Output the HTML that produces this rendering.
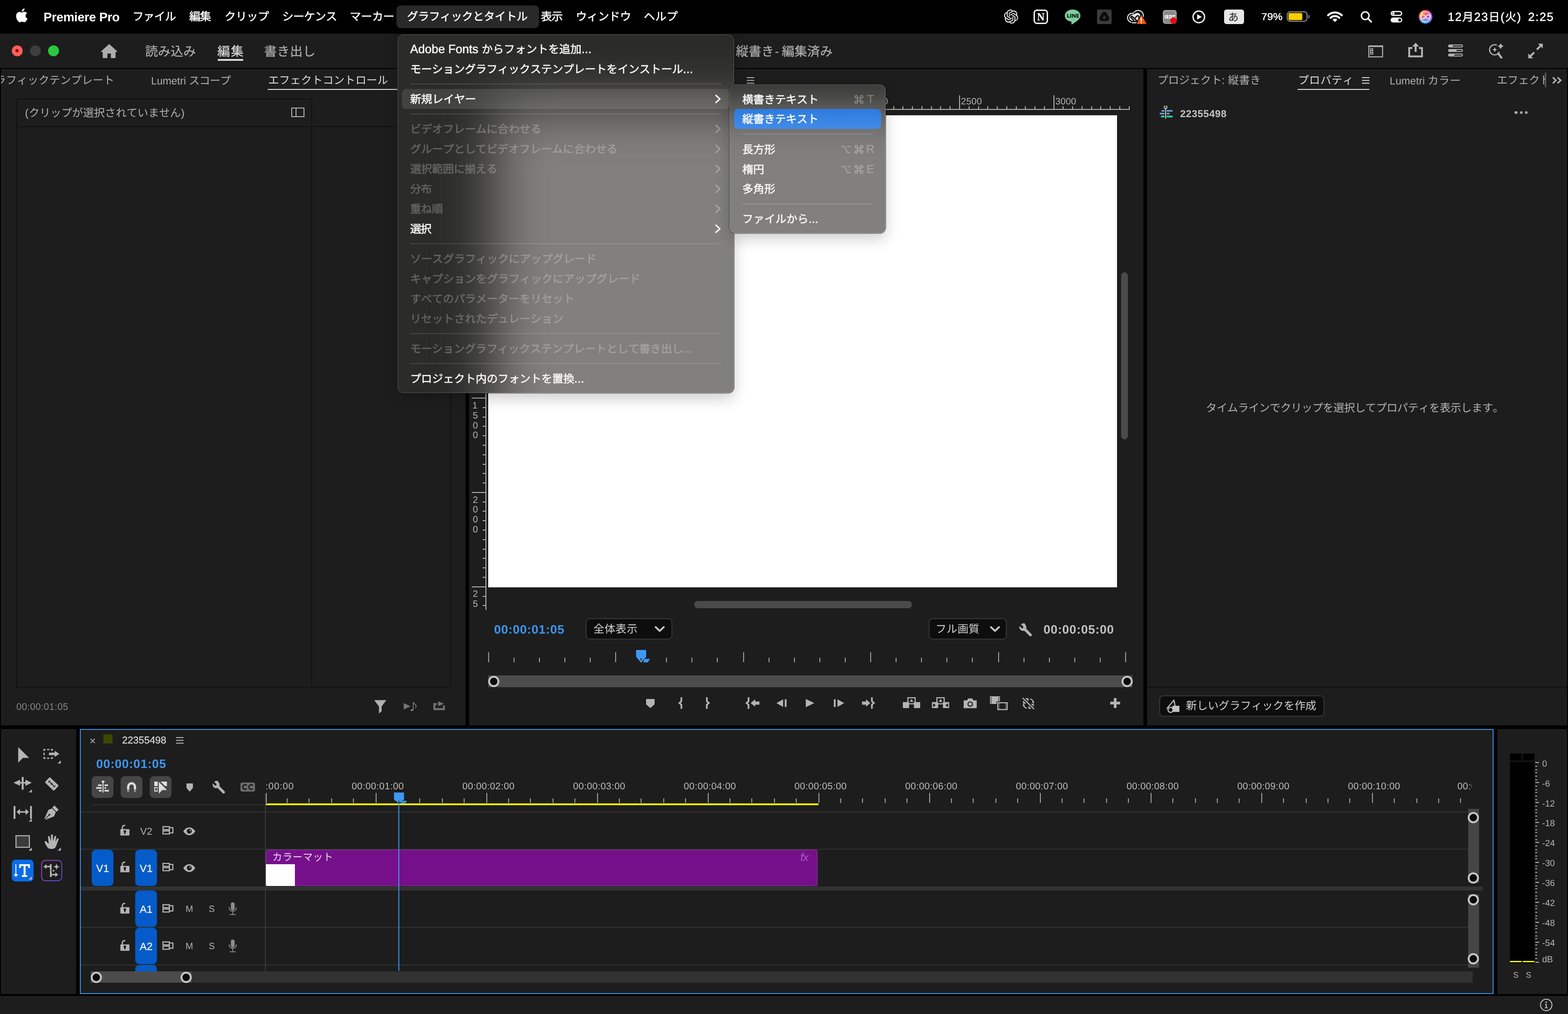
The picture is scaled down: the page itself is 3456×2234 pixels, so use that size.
<!DOCTYPE html>
<html lang="ja"><head><meta charset="utf-8"><title>Premiere Pro</title>
<style>
html,body{margin:0;padding:0;background:#1d1d1d}
body{width:3456px;height:2234px;position:relative;overflow:hidden;font-family:"Liberation Sans","Noto Sans CJK JP",sans-serif;font-kerning:none;text-rendering:geometricPrecision;-webkit-font-smoothing:antialiased}
.b{position:absolute;box-sizing:border-box}
.t{position:absolute;white-space:nowrap;will-change:transform}
</style></head><body>
<div class="b " style="left:0px;top:0px;width:3456px;height:74px;background:#000;"></div><svg class="b" style="left:34px;top:18px;overflow:visible" width="28" height="33" viewBox="0 0 28 33" ><path d="M21.9 17.3c0-4 3.3-5.9 3.4-6-1.9-2.7-4.7-3.1-5.7-3.1-2.4-.2-4.7 1.4-5.9 1.4-1.2 0-3.1-1.4-5.1-1.3-2.6 0-5 1.5-6.4 3.9-2.7 4.7-.7 11.7 2 15.5 1.3 1.9 2.8 4 4.9 3.9 2-.100 2.7-1.3 5.1-1.3 2.4 0 3 1.3 5.1 1.2 2.1 0 3.4-1.9 4.7-3.8 1.5-2.2 2.1-4.3 2.1-4.4-.100 0-4.1-1.6-4.2-6zM18 5.500c1.1-1.3 1.8-3.1 1.6-4.9-1.5.100-3.4 1-4.5 2.3-1 1.1-1.9 3-1.6 4.7 1.7.100 3.4-.900 4.5-2.100z" fill="#fff" transform="translate(0.6,0) scale(0.99,0.985)"/></svg><div class="t " style="left:95.66px;top:9.59px;font-size:27.5px;line-height:55.0px;color:#fff;letter-spacing:-0.299px;font-weight:700;">Premiere Pro</div><div class="t " style="left:292.06px;top:12.83px;font-size:24.8px;line-height:49.6px;color:#fff;-webkit-text-stroke:0.55px #fff;"><span style="letter-spacing:-0.94px">ファイル</span></div><div class="t " style="left:417.48px;top:12.83px;font-size:24.8px;line-height:49.6px;color:#fff;letter-spacing:-1.360px;-webkit-text-stroke:0.55px #fff;"><span style="letter-spacing:-1.36px">編集</span></div><div class="t " style="left:494.87px;top:12.83px;font-size:24.8px;line-height:49.6px;color:#fff;letter-spacing:0.121px;-webkit-text-stroke:0.55px #fff;"><span style="letter-spacing:-0.38px">クリップ</span></div><div class="t " style="left:622.15px;top:12.83px;font-size:24.8px;line-height:49.6px;color:#fff;-webkit-text-stroke:0.55px #fff;"><span style="letter-spacing:-0.76px">シーケンス</span></div><div class="t " style="left:771.29px;top:12.83px;font-size:24.8px;line-height:49.6px;color:#fff;-webkit-text-stroke:0.55px #fff;"><span style="letter-spacing:-0.27px">マーカー</span></div><div class="b " style="left:874px;top:12px;width:314px;height:50px;background:#292929;border-radius:9px"></div><div class="t " style="left:896.76px;top:12.83px;font-size:24.8px;line-height:49.6px;color:#fff;-webkit-text-stroke:0.55px #fff;"><span style="letter-spacing:-0.64px">グラフィックとタイトル</span></div><div class="t " style="left:1192.23px;top:12.83px;font-size:24.8px;line-height:49.6px;color:#fff;letter-spacing:-1.041px;-webkit-text-stroke:0.55px #fff;"><span style="letter-spacing:-1.04px">表示</span></div><div class="t " style="left:1268.90px;top:12.83px;font-size:24.8px;line-height:49.6px;color:#fff;-webkit-text-stroke:0.55px #fff;"><span style="letter-spacing:-0.45px">ウィンドウ</span></div><div class="t " style="left:1419.26px;top:12.83px;font-size:24.8px;line-height:49.6px;color:#fff;letter-spacing:0.213px;-webkit-text-stroke:0.55px #fff;"><span style="letter-spacing:0.21px">ヘルプ</span></div><svg class="b" style="left:2213.2px;top:21.2px" width="31" height="31" viewBox="0 0 24 24"><path d="M22.2819 9.8211a5.9847 5.9847 0 0 0-.5157-4.9108 6.0462 6.0462 0 0 0-6.5098-2.9A6.0651 6.0651 0 0 0 4.9807 4.1818a5.9847 5.9847 0 0 0-3.9977 2.9 6.0462 6.0462 0 0 0 .7427 7.0966 5.98 5.98 0 0 0 .511 4.9107 6.051 6.051 0 0 0 6.5146 2.9001A5.9847 5.9847 0 0 0 13.2599 24a6.0557 6.0557 0 0 0 5.7718-4.2058 5.9894 5.9894 0 0 0 3.9977-2.9001 6.0557 6.0557 0 0 0-.7475-7.0729zm-9.022 12.6081a4.4755 4.4755 0 0 1-2.8764-1.0408l.1419-.0804 4.7783-2.7582a.7948.7948 0 0 0 .3927-.6813v-6.7369l2.02 1.1686a.071.071 0 0 1 .038.052v5.5826a4.504 4.504 0 0 1-4.4945 4.4944zm-9.6607-4.1254a4.4708 4.4708 0 0 1-.5346-3.0137l.142.0852 4.783 2.7582a.7712.7712 0 0 0 .7806 0l5.8428-3.3685v2.3324a.0804.0804 0 0 1-.0332.0615L9.74 19.9502a4.4992 4.4992 0 0 1-6.1408-1.6464zM2.3408 7.8956a4.485 4.485 0 0 1 2.3655-1.9728V11.6a.7664.7664 0 0 0 .3879.6765l5.8144 3.3543-2.0201 1.1685a.0757.0757 0 0 1-.071 0l-4.8303-2.7865A4.504 4.504 0 0 1 2.3408 7.872zm16.5963 3.8558L13.1038 8.364 15.1192 7.2a.0757.0757 0 0 1 .071 0l4.8303 2.7913a4.4944 4.4944 0 0 1-.6765 8.1042v-5.6772a.79.79 0 0 0-.407-.667zm2.0107-3.0231l-.142-.0852-4.7735-2.7818a.7759.7759 0 0 0-.7854 0L9.409 9.2297V6.8974a.0662.0662 0 0 1 .0284-.0615l4.8303-2.7866a4.4992 4.4992 0 0 1 6.6802 4.66zM8.3065 12.863l-2.02-1.1638a.0804.0804 0 0 1-.038-.0567V6.0742a4.4992 4.4992 0 0 1 7.3757-3.4537l-.142.0805L8.704 5.459a.7948.7948 0 0 0-.3927.6813zm1.0976-2.3654l2.602-1.4998 2.6069 1.4998v2.9994l-2.5974 1.4997-2.6067-1.4997Z" fill="#f2f2f2"/></svg><svg class="b" style="left:2278px;top:21px;overflow:visible" width="32" height="32" viewBox="0 0 32 32" ><rect x="1.5" y="1.5" width="29" height="29" rx="6" fill="#0a0a0a" stroke="#f2f2f2" stroke-width="3"/><path d="M8.5 8 H13.5 L20.5 18.8 V9.8 L18.5 9.4 V8 H24 V9.4 L22.4 9.8 V24 H19.6 L11.7 12.2 V22.2 L13.8 22.6 V24 H8.5 V22.6 L10 22.2 V9.8 L8.5 9.4 Z" fill="#f2f2f2"/></svg><svg class="b" style="left:2347px;top:20.6px;overflow:visible" width="34.5" height="33" viewBox="0 0 34.5 33" ><path d="M17.2 0 C7.7 0 0 6 0 13.5 C0 20 5.8 25.4 13.8 26.7 C14.8 26.9 15 27.5 14.8 28.7 L14.5 31.5 C14.4 32.8 15.2 33 16.2 32.4 C20 30.2 27.5 25.5 31 21 C33.2 18.7 34.4 16.2 34.4 13.5 C34.4 6 26.7 0 17.2 0 Z" fill="#7ecf9f"/><g fill="#0e2a18"><rect x="5" y="9.5" width="2.4" height="8.5"/><rect x="5" y="15.8" width="5.5" height="2.2"/><rect x="11.8" y="9.5" width="2.4" height="8.5"/><path d="M15.8 9.5 H18 L21.6 14.5 V9.5 H23.9 V18 H21.7 L18.1 13 V18 H15.8 Z"/><path d="M25.5 9.5 H31 V11.6 H27.8 V12.8 H30.8 V14.8 H27.8 V15.9 H31 V18 H25.5 Z"/></g></svg><svg class="b" style="left:2418px;top:21px;overflow:visible" width="32" height="32" viewBox="0 0 32 32" ><rect x="0" y="0" width="32" height="32" rx="2.5" fill="#3c3c3c"/><path d="M12.5 5 H19.5 L27.5 19 L24 25.5 H8 L4.5 19 Z" fill="#0c0c0c"/><path d="M16 12.5 L20.3 19.8 H11.7 Z" fill="#3c3c3c"/></svg><svg class="b" style="left:2484px;top:21px;overflow:visible" width="44" height="33" viewBox="0 0 44 33" ><circle cx="11.2" cy="18.2" r="9.9" fill="none" stroke="#f2f2f2" stroke-width="2.3"/><circle cx="24.6" cy="13.6" r="11.4" fill="none" stroke="#f2f2f2" stroke-width="2.3"/><circle cx="11.2" cy="18.2" r="8.8" fill="#000"/><circle cx="24.6" cy="13.6" r="10.3" fill="#000"/><rect x="10" y="20" width="16" height="9.3" fill="#000"/><path d="M11 29.2 H24" stroke="#f2f2f2" stroke-width="2.3"/><circle cx="11.4" cy="18.4" r="6.3" fill="#e6e6e6"/><circle cx="24.4" cy="14" r="7.8" fill="#e6e6e6"/><path d="M11 12.1 L22 7 L30 20 L20 25 L11 24.7 Z" fill="#e6e6e6"/><path d="M23 26 L11.6 15.6 C9.6 13.8 7.4 16.6 9.2 18.4 L15.5 24.5" fill="none" stroke="#000" stroke-width="2.7" stroke-linejoin="round"/><path d="M15.2 9.6 C18 5.4 25 4.4 28.6 8.2 C31.2 11 30.6 14 29.2 15.6 L25 20" fill="none" stroke="#000" stroke-width="2.7"/><path d="M16.8 19.6 L22.2 14.2 C23.8 12.6 26.4 14.6 25 16.4" fill="none" stroke="#000" stroke-width="2.6"/><path d="M32.2 11.4 L43.3 30.4 C44 31.6 43.4 32.6 42 32.6 H22.6 C21.2 32.6 20.6 31.6 21.3 30.4 L30.4 11.4 C30.9 10.6 31.7 10.6 32.2 11.4 Z" fill="#f55a08" stroke="#000" stroke-width="1.6"/><rect x="30.1" y="17.6" width="2.5" height="8.6" fill="#fff"/><rect x="30.1" y="28" width="2.5" height="2.5" fill="#fff"/></svg><svg class="b" style="left:2562.7px;top:22px;overflow:visible" width="31" height="30.5" viewBox="0 0 31 30.5" ><rect x="0.8" y="0.8" width="28.8" height="28.8" rx="5" fill="#8a8a8a" stroke="#d0d0d0" stroke-width="1.2"/><g fill="#fff"><rect x="4.2" y="11" width="2.2" height="8"/><path d="M8 11 H12.8 V12.8 H10.2 V14 H12.5 V15.8 H10.2 V17.2 H12.8 V19 H8 Z"/><path d="M14.2 11 H17 C20 11 21 13 21 15 C21 17 20 19 17 19 H14.2 Z M16.4 12.9 V17.1 H17 C18.3 17.1 18.8 16.2 18.8 15 C18.8 13.8 18.3 12.9 17 12.9 Z"/><path d="M21.5 11 H27 V12.9 H25.4 V16 H23.2 V12.9 H21.5 Z"/></g><circle cx="23.2" cy="23.3" r="7" fill="#f00014"/></svg><svg class="b" style="left:2628px;top:22.7px;overflow:visible" width="28.6" height="28.6" viewBox="0 0 28.6 28.6" ><circle cx="14.3" cy="14.3" r="12.7" fill="none" stroke="#f2f2f2" stroke-width="3"/><path d="M10.5 8.3 L21 14.3 L10.5 20.3 Z" fill="#f2f2f2"/></svg><div class="b " style="left:2698px;top:21px;width:44px;height:32px;background:#e6e6e6;border-radius:5.500px"></div><div class="t " style="left:2707.18px;top:16.12px;font-size:22px;line-height:44px;color:#1a1a1a;"><span style="font-size:23px">あ</span></div><svg class="b" style="left:2836px;top:25.4px;overflow:visible" width="51" height="23.2" viewBox="0 0 51 23.2" ><rect x="1.2" y="1.2" width="43.6" height="20.6" rx="6.2" fill="none" stroke="#8c8c8c" stroke-width="2.3"/><rect x="3.9" y="3.8" width="30.6" height="15.5" rx="3.2" fill="#ffcc02"/><path d="M47.8 7.4 C49.8 8 50.5 9.6 50.5 11.6 C50.5 13.6 49.8 15.2 47.8 15.8 Z" fill="#8c8c8c"/></svg><svg class="b" style="left:2925px;top:24px;overflow:visible" width="34.5" height="25" viewBox="0 0 34.5 25" ><path d="M2.2 9.6 A21.5 21.5 0 0 1 32.3 9.6" fill="none" stroke="#f2f2f2" stroke-width="4.5" stroke-linecap="round"/><path d="M7.7 15.4 A13.8 13.8 0 0 1 26.8 15.4" fill="none" stroke="#f2f2f2" stroke-width="4.5" stroke-linecap="round"/><path d="M17.25 24.7 L11.8 19.2 A7.6 7.6 0 0 1 22.7 19.2 Z" fill="#f2f2f2"/></svg><svg class="b" style="left:2999px;top:23.8px;overflow:visible" width="25.5" height="25" viewBox="0 0 25.5 25" ><circle cx="10.1" cy="10.6" r="8.5" fill="none" stroke="#f2f2f2" stroke-width="3.3"/><path d="M16.4 17 L23.4 24" stroke="#f2f2f2" stroke-width="3.7" stroke-linecap="round"/></svg><svg class="b" style="left:3065.4px;top:24.1px;overflow:visible" width="25.6" height="25.6" viewBox="0 0 25.6 25.6" ><rect x="1.4" y="1.4" width="22.8" height="8.4" rx="4.2" fill="none" stroke="#f2f2f2" stroke-width="2.8"/><circle cx="6.3" cy="5.6" r="2.6" fill="#f2f2f2"/><rect x="0" y="14.5" width="25.6" height="11.1" rx="5.55" fill="#f2f2f2"/><circle cx="20" cy="20.05" r="3.1" fill="#000"/></svg><svg class="b" style="left:3127.4px;top:22px;overflow:visible" width="30" height="30" viewBox="0 0 30 30" ><defs><radialGradient id="sg1" cx="0.2" cy="0.2" r="0.9"><stop offset="0" stop-color="#ffb03c"/><stop offset="0.45" stop-color="#f4506e"/><stop offset="0.8" stop-color="#a55cf2"/><stop offset="1" stop-color="#5a78ff"/></radialGradient><radialGradient id="sg2" cx="0.35" cy="0.95" r="0.6"><stop offset="0" stop-color="#37c8ff"/><stop offset="0.6" stop-color="#37c8ff" stop-opacity="0.35"/><stop offset="1" stop-color="#37c8ff" stop-opacity="0"/></radialGradient></defs><circle cx="15" cy="15" r="15" fill="url(#sg1)"/><circle cx="15" cy="15" r="15" fill="url(#sg2)"/><path d="M4.5 15.5 C7 8.5 12 9.5 15 15 C18 20.5 23 21.5 25.5 14.5 C23 9 18.5 9.5 15 15 C11.5 20.5 7 21 4.5 15.5 Z" fill="none" stroke="#fff" stroke-width="1.6" opacity="0.95"/><circle cx="15" cy="15" r="11" fill="none" stroke="#fff" stroke-width="1.5" opacity="0.8"/></svg><div class="t " style="left:2779.69px;top:15.49px;font-size:21.6px;line-height:43.2px;color:#fff;-webkit-text-stroke:0.50px #fff;transform:scaleX(1.085);transform-origin:0 50%">79%</div><div class="t " style="left:3191.02px;top:10.94px;font-size:26px;line-height:52px;color:#fff;letter-spacing:1.517px;-webkit-text-stroke:0.5px #fff">12<span style="font-size:24.6px">月</span>23<span style="font-size:24.6px">日</span>(<span style="font-size:24.6px">火</span>)</div><div class="t " style="left:3367.69px;top:11.07px;font-size:26px;line-height:52px;color:#fff;letter-spacing:1.732px;-webkit-text-stroke:0.55px #fff">2:25</div><div class="b " style="left:0px;top:74px;width:3456px;height:76px;background:#1d1d1d;"></div><div class="b " style="left:0px;top:150px;width:3456px;height:2px;background:#000;"></div><div class="b " style="left:25.799999999999997px;top:99.8px;width:24px;height:24px;background:#fe5f57;border-radius:50%"></div><div class="b " style="left:65.8px;top:99.8px;width:24px;height:24px;background:#3e3e3e;border-radius:50%"></div><div class="b " style="left:105.8px;top:99.8px;width:24px;height:24px;background:#28c840;border-radius:50%"></div><div class="b " style="left:34.199999999999996px;top:108.2px;width:7.2px;height:7.2px;background:#8a0a05;border-radius:50%"></div><svg class="b" style="left:221.5px;top:97px;overflow:visible" width="37" height="31" viewBox="0 0 37 31" ><path d="M18.3 0.3 Q18.5 0 18.9 0.3 L36.3 16.2 Q36.7 17.6 35.4 17.6 L32.6 17.6 L32.6 30.6 Q32.6 31 32.2 31 L22.4 31 L22.4 21 L14.6 21 L14.6 31 L4.8 31 Q4.4 31 4.4 30.6 L4.4 17.6 L1.4 17.6 Q0.3 17.6 0.6 16.2 Z" fill="#adadad"/></svg><div class="t " style="left:319.94px;top:85.74px;font-size:28px;line-height:56px;color:#b0b0b0;-webkit-text-stroke:0.25px #b0b0b0;"><span style="letter-spacing:0px">読み込み</span></div><div class="t " style="left:479.27px;top:85.74px;font-size:28px;line-height:56px;color:#dcdcdc;letter-spacing:1.624px;-webkit-text-stroke:0.25px #dcdcdc;"><span style="letter-spacing:1.625px">編集</span></div><div class="b " style="left:480px;top:130px;width:56px;height:3.5px;background:#dcdcdc;"></div><div class="t " style="left:582.46px;top:85.74px;font-size:28px;line-height:56px;color:#b0b0b0;letter-spacing:0.465px;-webkit-text-stroke:0.25px #b0b0b0;"><span style="letter-spacing:0.465px">書き出し</span></div><div class="t " style="left:1622.01px;top:85.74px;font-size:28px;line-height:56px;color:#b0b0b0;-webkit-text-stroke:0.25px #b0b0b0;"><span style="letter-spacing:0px">縦書き</span></div><div class="t " style="left:1707.74px;top:86.77px;font-size:26px;line-height:52px;color:#b0b0b0;-webkit-text-stroke:0.25px #b0b0b0;">-</div><div class="t " style="left:1723.07px;top:85.74px;font-size:28px;line-height:56px;color:#b0b0b0;letter-spacing:0.061px;-webkit-text-stroke:0.25px #b0b0b0;"><span style="letter-spacing:0.06px">編集済み</span></div><svg class="b" style="left:3015.8px;top:100px;overflow:visible" width="32.5" height="26.5" viewBox="0 0 32.5 26.5" ><rect x="1.1" y="1.1" width="30.2" height="24.2" fill="none" stroke="#b4b4b4" stroke-width="2.2"/><rect x="0" y="0" width="32.4" height="3.6" fill="#b4b4b4"/><rect x="4" y="6.2" width="6.6" height="14.2" fill="#b4b4b4"/><rect x="5.9" y="7.6" width="2.8" height="2.6" fill="#1d1d1d"/><rect x="5.9" y="12" width="2.8" height="2.6" fill="#1d1d1d"/><rect x="5.9" y="16.4" width="2.8" height="2.6" fill="#1d1d1d"/></svg><svg class="b" style="left:3103.7px;top:94px;overflow:visible" width="32.5" height="32.5" viewBox="0 0 32.5 32.5" ><path d="M9 11.8 H2 V30.3 H30.2 V11.8 H23.5" fill="none" stroke="#b4b4b4" stroke-width="4"/><path d="M16.2 0.2 L24 8.6 H18.4 V20.2 H14 V8.6 H8.4 Z" fill="#b4b4b4"/></svg><svg class="b" style="left:3192px;top:97.8px;overflow:visible" width="32.5" height="26.5" viewBox="0 0 32.5 26.5" ><rect x="0" y="0" width="32.3" height="6.4" rx="3.2" fill="#b4b4b4"/><rect x="0" y="10" width="32.3" height="6.4" rx="3.2" fill="#b4b4b4"/><rect x="0" y="20" width="32.3" height="6.4" rx="3.2" fill="#b4b4b4"/><rect x="10" y="2" width="20.4" height="2.4" rx="1.2" fill="#1d1d1d"/><rect x="18" y="12" width="12.4" height="2.4" rx="1.2" fill="#1d1d1d"/><rect x="13.5" y="22" width="16.9" height="2.4" rx="1.2" fill="#1d1d1d"/></svg><svg class="b" style="left:3282px;top:95px;overflow:visible" width="32" height="34.5" viewBox="0 0 32 34.5" ><path d="M22.6 19.2 A11.2 11.2 0 1 1 17.2 4.6" fill="none" stroke="#b4b4b4" stroke-width="2.6"/><path d="M20.4 23 L27 31.8" stroke="#b4b4b4" stroke-width="4.6" stroke-linecap="round"/><path d="M25.6 0.0 Q27.096 5.304 32.4 6.8 Q27.096 8.296 25.6 13.6 Q24.104000000000003 8.296 18.8 6.8 Q24.104000000000003 5.304 25.6 0.0 Z" fill="#b4b4b4"/><path d="M12.6 9.6 Q13.7 13.5 17.6 14.6 Q13.7 15.7 12.6 19.6 Q11.5 15.7 7.6 14.6 Q11.5 13.5 12.6 9.6 Z" fill="#b4b4b4"/></svg><svg class="b" style="left:3367.5px;top:95.8px;overflow:visible" width="33.5" height="32.7" viewBox="0 0 33.5 32.7" ><path d="M21.8 0.2 H32.4 V10.8 Z" fill="#b4b4b4"/><path d="M27.6 5 L19.4 13.2" stroke="#b4b4b4" stroke-width="4.2"/><path d="M0.5 21.8 V32.4 H11.1 Z" fill="#b4b4b4"/><path d="M5.3 27.6 L13.5 19.4" stroke="#b4b4b4" stroke-width="4.2"/></svg><div class="b " style="left:0px;top:152px;width:2px;height:1446px;background:#000;"></div><div class="b " style="left:1026px;top:152px;width:8px;height:1446px;background:#000;"></div><div class="b " style="left:2520px;top:152px;width:8px;height:1446px;background:#000;"></div><div class="b " style="left:3454px;top:152px;width:2px;height:1446px;background:#000;"></div><div class="b " style="left:0px;top:1598px;width:3456px;height:8px;background:#000;"></div><div class="b" style="left:2px;top:156px;width:260px;height:40px;overflow:hidden"><div class="t " style="left:-13.08px;top:-2.40px;font-size:24px;line-height:48px;color:#b0b0b0;letter-spacing:0.217px;"><span style="letter-spacing:-0.09px">ラフィックテンプレート</span></div></div><div class="t " style="left:332.81px;top:153.60px;font-size:24px;line-height:48px;color:#b0b0b0;"><span style="font-size:23.04px">Lumetri </span><span style="letter-spacing:-1.04px">スコープ</span></div><div class="t " style="left:590.98px;top:153.60px;font-size:24px;line-height:48px;color:#dcdcdc;letter-spacing:0.668px;"><span style="letter-spacing:0.05px">エフェクトコントロール</span></div><div class="b " style="left:590px;top:196px;width:300px;height:2.3px;background:#e2e2e2;"></div><div class="b " style="left:36px;top:216.6px;width:652px;height:2px;background:#111;"></div><div class="b " style="left:36px;top:216.6px;width:2px;height:1298.4px;background:#111;"></div><div class="b " style="left:686px;top:216.6px;width:2px;height:1298.4px;background:#111;"></div><div class="b " style="left:36px;top:278px;width:958px;height:2px;background:#111;"></div><div class="b " style="left:992px;top:278px;width:2px;height:1237px;background:#111;"></div><div class="b " style="left:36px;top:1513px;width:958px;height:2px;background:#111;"></div><div class="t " style="left:54.71px;top:226.30px;font-size:24px;line-height:48px;color:#b0b0b0;letter-spacing:0.153px;">(<span style="letter-spacing:-0.03px">クリップが選択されていません</span>)</div><svg class="b" style="left:641.7px;top:237.4px;overflow:visible" width="29" height="21" viewBox="0 0 29 21" ><rect x="1" y="1" width="27" height="19" fill="none" stroke="#b4b4b4" stroke-width="2"/><rect x="9.5" y="1" width="2" height="19" fill="#b4b4b4"/></svg><div class="t " style="left:35.68px;top:1537.38px;font-size:21px;line-height:42px;color:#868686;letter-spacing:0.327px;">00:00:01:05</div><svg class="b" style="left:0px;top:0px;overflow:visible" width="3456" height="2234" viewBox="0 0 3456 2234" ><path d="M824.8 1542.6 H851.6 L841.1 1556.5 V1567 L835.3 1572 V1556.5 Z" fill="#b0b0b0"/><path d="M889.8 1548.9 L904.9 1556 L889.8 1563.2 Z" fill="#747474"/><path d="M910.8 1564 V1546.6 C911.6 1551 917.6 1551.6 917.2 1556.6 C917 1558.6 916 1559.6 915 1560.2" fill="none" stroke="#747474" stroke-width="1.9"/><ellipse cx="908.2" cy="1564.3" rx="3.3" ry="2.4" fill="#747474" transform="rotate(-20 908.2 1564.3)"/><path d="M962.8 1551.2 H957.4 V1562.4 H978.4 V1554.3" fill="none" stroke="#747474" stroke-width="4.2"/><path d="M965.8 1545.1 L978.3 1550.6 L965.8 1556 Z" fill="#747474"/></svg><svg class="b" style="left:1646.4px;top:170px;overflow:visible" width="16.5" height="14.5" viewBox="0 0 16.5 14.5" ><rect x="0" y="0" width="16.5" height="2" fill="#b0b0b0"/><rect x="0" y="6.2" width="16.5" height="2" fill="#b0b0b0"/><rect x="0" y="12.4" width="16.5" height="2" fill="#b0b0b0"/></svg><div class="b " style="left:1076px;top:210px;width:2px;height:31px;background:#b4b4b4;"></div><div class="b " style="left:1097px;top:234px;width:2px;height:7px;background:#b4b4b4;"></div><div class="b " style="left:1118px;top:234px;width:2px;height:7px;background:#b4b4b4;"></div><div class="b " style="left:1138px;top:234px;width:2px;height:7px;background:#b4b4b4;"></div><div class="b " style="left:1159px;top:234px;width:2px;height:7px;background:#b4b4b4;"></div><div class="b " style="left:1180px;top:234px;width:2px;height:7px;background:#b4b4b4;"></div><div class="b " style="left:1201px;top:234px;width:2px;height:7px;background:#b4b4b4;"></div><div class="b " style="left:1221px;top:234px;width:2px;height:7px;background:#b4b4b4;"></div><div class="b " style="left:1242px;top:234px;width:2px;height:7px;background:#b4b4b4;"></div><div class="b " style="left:1263px;top:234px;width:2px;height:7px;background:#b4b4b4;"></div><div class="b " style="left:1284px;top:210px;width:2px;height:31px;background:#b4b4b4;"></div><div class="b " style="left:1304px;top:234px;width:2px;height:7px;background:#b4b4b4;"></div><div class="b " style="left:1325px;top:234px;width:2px;height:7px;background:#b4b4b4;"></div><div class="b " style="left:1346px;top:234px;width:2px;height:7px;background:#b4b4b4;"></div><div class="b " style="left:1367px;top:234px;width:2px;height:7px;background:#b4b4b4;"></div><div class="b " style="left:1387px;top:234px;width:2px;height:7px;background:#b4b4b4;"></div><div class="b " style="left:1408px;top:234px;width:2px;height:7px;background:#b4b4b4;"></div><div class="b " style="left:1429px;top:234px;width:2px;height:7px;background:#b4b4b4;"></div><div class="b " style="left:1450px;top:234px;width:2px;height:7px;background:#b4b4b4;"></div><div class="b " style="left:1470px;top:234px;width:2px;height:7px;background:#b4b4b4;"></div><div class="b " style="left:1491px;top:210px;width:2px;height:31px;background:#b4b4b4;"></div><div class="b " style="left:1512px;top:234px;width:2px;height:7px;background:#b4b4b4;"></div><div class="b " style="left:1533px;top:234px;width:2px;height:7px;background:#b4b4b4;"></div><div class="b " style="left:1553px;top:234px;width:2px;height:7px;background:#b4b4b4;"></div><div class="b " style="left:1574px;top:234px;width:2px;height:7px;background:#b4b4b4;"></div><div class="b " style="left:1595px;top:234px;width:2px;height:7px;background:#b4b4b4;"></div><div class="b " style="left:1616px;top:234px;width:2px;height:7px;background:#b4b4b4;"></div><div class="b " style="left:1637px;top:234px;width:2px;height:7px;background:#b4b4b4;"></div><div class="b " style="left:1657px;top:234px;width:2px;height:7px;background:#b4b4b4;"></div><div class="b " style="left:1678px;top:234px;width:2px;height:7px;background:#b4b4b4;"></div><div class="b " style="left:1699px;top:210px;width:2px;height:31px;background:#b4b4b4;"></div><div class="b " style="left:1720px;top:234px;width:2px;height:7px;background:#b4b4b4;"></div><div class="b " style="left:1740px;top:234px;width:2px;height:7px;background:#b4b4b4;"></div><div class="b " style="left:1761px;top:234px;width:2px;height:7px;background:#b4b4b4;"></div><div class="b " style="left:1782px;top:234px;width:2px;height:7px;background:#b4b4b4;"></div><div class="b " style="left:1803px;top:234px;width:2px;height:7px;background:#b4b4b4;"></div><div class="b " style="left:1823px;top:234px;width:2px;height:7px;background:#b4b4b4;"></div><div class="b " style="left:1844px;top:234px;width:2px;height:7px;background:#b4b4b4;"></div><div class="b " style="left:1865px;top:234px;width:2px;height:7px;background:#b4b4b4;"></div><div class="b " style="left:1886px;top:234px;width:2px;height:7px;background:#b4b4b4;"></div><div class="b " style="left:1906px;top:210px;width:2px;height:31px;background:#b4b4b4;"></div><div class="b " style="left:1927px;top:234px;width:2px;height:7px;background:#b4b4b4;"></div><div class="b " style="left:1948px;top:234px;width:2px;height:7px;background:#b4b4b4;"></div><div class="b " style="left:1969px;top:234px;width:2px;height:7px;background:#b4b4b4;"></div><div class="b " style="left:1989px;top:234px;width:2px;height:7px;background:#b4b4b4;"></div><div class="b " style="left:2010px;top:234px;width:2px;height:7px;background:#b4b4b4;"></div><div class="b " style="left:2031px;top:234px;width:2px;height:7px;background:#b4b4b4;"></div><div class="b " style="left:2052px;top:234px;width:2px;height:7px;background:#b4b4b4;"></div><div class="b " style="left:2072px;top:234px;width:2px;height:7px;background:#b4b4b4;"></div><div class="b " style="left:2093px;top:234px;width:2px;height:7px;background:#b4b4b4;"></div><div class="b " style="left:2114px;top:210px;width:2px;height:31px;background:#b4b4b4;"></div><div class="b " style="left:2135px;top:234px;width:2px;height:7px;background:#b4b4b4;"></div><div class="b " style="left:2156px;top:234px;width:2px;height:7px;background:#b4b4b4;"></div><div class="b " style="left:2176px;top:234px;width:2px;height:7px;background:#b4b4b4;"></div><div class="b " style="left:2197px;top:234px;width:2px;height:7px;background:#b4b4b4;"></div><div class="b " style="left:2218px;top:234px;width:2px;height:7px;background:#b4b4b4;"></div><div class="b " style="left:2239px;top:234px;width:2px;height:7px;background:#b4b4b4;"></div><div class="b " style="left:2259px;top:234px;width:2px;height:7px;background:#b4b4b4;"></div><div class="b " style="left:2280px;top:234px;width:2px;height:7px;background:#b4b4b4;"></div><div class="b " style="left:2301px;top:234px;width:2px;height:7px;background:#b4b4b4;"></div><div class="b " style="left:2322px;top:210px;width:2px;height:31px;background:#b4b4b4;"></div><div class="b " style="left:2342px;top:234px;width:2px;height:7px;background:#b4b4b4;"></div><div class="b " style="left:2363px;top:234px;width:2px;height:7px;background:#b4b4b4;"></div><div class="b " style="left:2384px;top:234px;width:2px;height:7px;background:#b4b4b4;"></div><div class="b " style="left:2405px;top:234px;width:2px;height:7px;background:#b4b4b4;"></div><div class="b " style="left:2425px;top:234px;width:2px;height:7px;background:#b4b4b4;"></div><div class="b " style="left:2446px;top:234px;width:2px;height:7px;background:#b4b4b4;"></div><div class="b " style="left:2467px;top:234px;width:2px;height:7px;background:#b4b4b4;"></div><div class="b " style="left:2488px;top:234px;width:2px;height:7px;background:#b4b4b4;"></div><div class="b " style="left:1075px;top:240px;width:1415px;height:2px;background:#b4b4b4;"></div><div class="b " style="left:2488px;top:234px;width:2px;height:8px;background:#b4b4b4;"></div><div class="t " style="left:1080.70px;top:202.67px;font-size:20.5px;line-height:41.0px;color:#b4b4b4;">0</div><div class="t " style="left:1288.28px;top:202.67px;font-size:20.5px;line-height:41.0px;color:#b4b4b4;letter-spacing:-0.041px;">500</div><div class="t " style="left:1495.14px;top:202.67px;font-size:20.5px;line-height:41.0px;color:#b4b4b4;letter-spacing:0.319px;">1000</div><div class="t " style="left:1702.74px;top:202.67px;font-size:20.5px;line-height:41.0px;color:#b4b4b4;letter-spacing:0.319px;">1500</div><div class="t " style="left:1910.87px;top:202.67px;font-size:20.5px;line-height:41.0px;color:#b4b4b4;letter-spacing:0.142px;">2000</div><div class="t " style="left:2118.47px;top:202.67px;font-size:20.5px;line-height:41.0px;color:#b4b4b4;letter-spacing:0.142px;">2500</div><div class="t " style="left:2326.32px;top:202.67px;font-size:20.5px;line-height:41.0px;color:#b4b4b4;letter-spacing:0.059px;">3000</div><div class="b " style="left:1040px;top:253px;width:31px;height:2px;background:#b4b4b4;"></div><div class="b " style="left:1064px;top:273px;width:7px;height:2px;background:#b4b4b4;"></div><div class="b " style="left:1064px;top:294px;width:7px;height:2px;background:#b4b4b4;"></div><div class="b " style="left:1064px;top:315px;width:7px;height:2px;background:#b4b4b4;"></div><div class="b " style="left:1064px;top:336px;width:7px;height:2px;background:#b4b4b4;"></div><div class="b " style="left:1064px;top:356px;width:7px;height:2px;background:#b4b4b4;"></div><div class="b " style="left:1064px;top:377px;width:7px;height:2px;background:#b4b4b4;"></div><div class="b " style="left:1064px;top:398px;width:7px;height:2px;background:#b4b4b4;"></div><div class="b " style="left:1064px;top:419px;width:7px;height:2px;background:#b4b4b4;"></div><div class="b " style="left:1064px;top:440px;width:7px;height:2px;background:#b4b4b4;"></div><div class="b " style="left:1040px;top:460px;width:31px;height:2px;background:#b4b4b4;"></div><div class="b " style="left:1064px;top:481px;width:7px;height:2px;background:#b4b4b4;"></div><div class="b " style="left:1064px;top:502px;width:7px;height:2px;background:#b4b4b4;"></div><div class="b " style="left:1064px;top:523px;width:7px;height:2px;background:#b4b4b4;"></div><div class="b " style="left:1064px;top:543px;width:7px;height:2px;background:#b4b4b4;"></div><div class="b " style="left:1064px;top:564px;width:7px;height:2px;background:#b4b4b4;"></div><div class="b " style="left:1064px;top:585px;width:7px;height:2px;background:#b4b4b4;"></div><div class="b " style="left:1064px;top:606px;width:7px;height:2px;background:#b4b4b4;"></div><div class="b " style="left:1064px;top:627px;width:7px;height:2px;background:#b4b4b4;"></div><div class="b " style="left:1064px;top:647px;width:7px;height:2px;background:#b4b4b4;"></div><div class="b " style="left:1040px;top:668px;width:31px;height:2px;background:#b4b4b4;"></div><div class="b " style="left:1064px;top:689px;width:7px;height:2px;background:#b4b4b4;"></div><div class="b " style="left:1064px;top:710px;width:7px;height:2px;background:#b4b4b4;"></div><div class="b " style="left:1064px;top:731px;width:7px;height:2px;background:#b4b4b4;"></div><div class="b " style="left:1064px;top:751px;width:7px;height:2px;background:#b4b4b4;"></div><div class="b " style="left:1064px;top:772px;width:7px;height:2px;background:#b4b4b4;"></div><div class="b " style="left:1064px;top:793px;width:7px;height:2px;background:#b4b4b4;"></div><div class="b " style="left:1064px;top:814px;width:7px;height:2px;background:#b4b4b4;"></div><div class="b " style="left:1064px;top:834px;width:7px;height:2px;background:#b4b4b4;"></div><div class="b " style="left:1064px;top:855px;width:7px;height:2px;background:#b4b4b4;"></div><div class="b " style="left:1040px;top:876px;width:31px;height:2px;background:#b4b4b4;"></div><div class="b " style="left:1064px;top:897px;width:7px;height:2px;background:#b4b4b4;"></div><div class="b " style="left:1064px;top:918px;width:7px;height:2px;background:#b4b4b4;"></div><div class="b " style="left:1064px;top:938px;width:7px;height:2px;background:#b4b4b4;"></div><div class="b " style="left:1064px;top:959px;width:7px;height:2px;background:#b4b4b4;"></div><div class="b " style="left:1064px;top:980px;width:7px;height:2px;background:#b4b4b4;"></div><div class="b " style="left:1064px;top:1001px;width:7px;height:2px;background:#b4b4b4;"></div><div class="b " style="left:1064px;top:1022px;width:7px;height:2px;background:#b4b4b4;"></div><div class="b " style="left:1064px;top:1042px;width:7px;height:2px;background:#b4b4b4;"></div><div class="b " style="left:1064px;top:1063px;width:7px;height:2px;background:#b4b4b4;"></div><div class="b " style="left:1040px;top:1084px;width:31px;height:2px;background:#b4b4b4;"></div><div class="b " style="left:1064px;top:1105px;width:7px;height:2px;background:#b4b4b4;"></div><div class="b " style="left:1064px;top:1125px;width:7px;height:2px;background:#b4b4b4;"></div><div class="b " style="left:1064px;top:1146px;width:7px;height:2px;background:#b4b4b4;"></div><div class="b " style="left:1064px;top:1167px;width:7px;height:2px;background:#b4b4b4;"></div><div class="b " style="left:1064px;top:1188px;width:7px;height:2px;background:#b4b4b4;"></div><div class="b " style="left:1064px;top:1209px;width:7px;height:2px;background:#b4b4b4;"></div><div class="b " style="left:1064px;top:1229px;width:7px;height:2px;background:#b4b4b4;"></div><div class="b " style="left:1064px;top:1250px;width:7px;height:2px;background:#b4b4b4;"></div><div class="b " style="left:1064px;top:1271px;width:7px;height:2px;background:#b4b4b4;"></div><div class="b " style="left:1040px;top:1292px;width:31px;height:2px;background:#b4b4b4;"></div><div class="b " style="left:1064px;top:1313px;width:7px;height:2px;background:#b4b4b4;"></div><div class="b " style="left:1064px;top:1333px;width:7px;height:2px;background:#b4b4b4;"></div><div class="b " style="left:1070px;top:252px;width:2px;height:1092px;background:#b4b4b4;"></div><div class="t " style="left:1041.60px;top:249.17px;font-size:20.5px;line-height:41.0px;color:#b4b4b4;">0</div><div class="t " style="left:1041.62px;top:457.02px;font-size:20.5px;line-height:41.0px;color:#b4b4b4;">5</div><div class="t " style="left:1041.60px;top:478.92px;font-size:20.5px;line-height:41.0px;color:#b4b4b4;">0</div><div class="t " style="left:1041.60px;top:500.82px;font-size:20.5px;line-height:41.0px;color:#b4b4b4;">0</div><div class="t " style="left:1041.32px;top:664.87px;font-size:20.5px;line-height:41.0px;color:#b4b4b4;">1</div><div class="t " style="left:1041.60px;top:686.77px;font-size:20.5px;line-height:41.0px;color:#b4b4b4;">0</div><div class="t " style="left:1041.60px;top:708.67px;font-size:20.5px;line-height:41.0px;color:#b4b4b4;">0</div><div class="t " style="left:1041.60px;top:730.57px;font-size:20.5px;line-height:41.0px;color:#b4b4b4;">0</div><div class="t " style="left:1041.32px;top:872.72px;font-size:20.5px;line-height:41.0px;color:#b4b4b4;">1</div><div class="t " style="left:1041.62px;top:894.62px;font-size:20.5px;line-height:41.0px;color:#b4b4b4;">5</div><div class="t " style="left:1041.60px;top:916.52px;font-size:20.5px;line-height:41.0px;color:#b4b4b4;">0</div><div class="t " style="left:1041.60px;top:938.42px;font-size:20.5px;line-height:41.0px;color:#b4b4b4;">0</div><div class="t " style="left:1041.60px;top:1080.57px;font-size:20.5px;line-height:41.0px;color:#b4b4b4;">2</div><div class="t " style="left:1041.60px;top:1102.47px;font-size:20.5px;line-height:41.0px;color:#b4b4b4;">0</div><div class="t " style="left:1041.60px;top:1124.37px;font-size:20.5px;line-height:41.0px;color:#b4b4b4;">0</div><div class="t " style="left:1041.60px;top:1146.27px;font-size:20.5px;line-height:41.0px;color:#b4b4b4;">0</div><div class="t " style="left:1041.60px;top:1288.42px;font-size:20.5px;line-height:41.0px;color:#b4b4b4;">2</div><div class="t " style="left:1041.62px;top:1310.32px;font-size:20.5px;line-height:41.0px;color:#b4b4b4;">5</div><div class="b " style="left:1075.5px;top:254px;width:1386.5px;height:1039.8px;background:#fff;"></div><div class="b " style="left:2470.5px;top:600px;width:15.5px;height:367.5px;background:#4a4a4a;border-radius:8px"></div><div class="b " style="left:1530px;top:1324px;width:480px;height:16px;background:#4a4a4a;border-radius:8px"></div><div class="t " style="left:1089.33px;top:1359.99px;font-size:27px;line-height:54px;color:#3e97f3;letter-spacing:0.732px;font-weight:700;">00:00:01:05</div><div class="b " style="left:1290.6px;top:1362.4px;width:191px;height:46.6px;background:#0d0d0d;border:2px solid #373737;border-radius:9px"></div><div class="t " style="left:1307.71px;top:1362.80px;font-size:24px;line-height:48px;color:#cfcfcf;letter-spacing:0.435px;"><span style="letter-spacing:0.435px">全体表示</span></div><svg class="b" style="left:1443px;top:1378.7px;" width="22" height="14" viewBox="0 0 22 14"><path d="M2 2.5 L11 11 L20 2.5" fill="none" stroke="#c4c4c4" stroke-width="4" stroke-linecap="round" stroke-linejoin="round"/></svg><div class="b " style="left:2046.9px;top:1362.4px;width:172px;height:46.6px;background:#0d0d0d;border:2px solid #373737;border-radius:9px"></div><div class="t " style="left:2062.32px;top:1362.80px;font-size:24px;line-height:48px;color:#cfcfcf;letter-spacing:0.243px;"><span style="letter-spacing:0.24px">フル画質</span></div><svg class="b" style="left:2181.5px;top:1378.7px;" width="22" height="14" viewBox="0 0 22 14"><path d="M2 2.5 L11 11 L20 2.5" fill="none" stroke="#c4c4c4" stroke-width="4" stroke-linecap="round" stroke-linejoin="round"/></svg><svg class="b" style="left:2245.8px;top:1372.5px;overflow:visible" width="29" height="29" viewBox="0 0 29 29" ><path d="M11.5 0.3 C8.5 -0.5 5.2 0.2 2.9 2.3 L8.3 7.7 L7.7 10.7 L4.7 11.3 L-0.6 6 C-1.5 9 -0.8 12.3 1.5 14.6 C3.9 17 7.4 17.7 10.4 16.6 L22.3 28.5 C23.5 29.7 25.5 29.7 26.7 28.5 C27.9 27.3 27.9 25.3 26.7 24.1 L14.8 12.2 C15.9 9.2 15.2 5.7 12.8 3.3 Z" fill="#b4b4b4" transform="translate(1.5,0.3) scale(0.97)"/></svg><div class="t " style="left:2299.93px;top:1359.99px;font-size:27px;line-height:54px;color:#c2c2c2;letter-spacing:0.767px;font-weight:700;">00:00:05:00</div><div class="b " style="left:1076px;top:1437px;width:2px;height:21.5px;background:#a2a2a2;"></div><div class="b " style="left:1132px;top:1449px;width:2px;height:9.5px;background:#a2a2a2;"></div><div class="b " style="left:1188px;top:1449px;width:2px;height:9.5px;background:#a2a2a2;"></div><div class="b " style="left:1244px;top:1449px;width:2px;height:9.5px;background:#a2a2a2;"></div><div class="b " style="left:1300px;top:1449px;width:2px;height:9.5px;background:#a2a2a2;"></div><div class="b " style="left:1356px;top:1437px;width:2px;height:21.5px;background:#a2a2a2;"></div><div class="b " style="left:1412px;top:1449px;width:2px;height:9.5px;background:#a2a2a2;"></div><div class="b " style="left:1468px;top:1449px;width:2px;height:9.5px;background:#a2a2a2;"></div><div class="b " style="left:1524px;top:1449px;width:2px;height:9.5px;background:#a2a2a2;"></div><div class="b " style="left:1580px;top:1449px;width:2px;height:9.5px;background:#a2a2a2;"></div><div class="b " style="left:1638px;top:1437px;width:2px;height:21.5px;background:#a2a2a2;"></div><div class="b " style="left:1694px;top:1449px;width:2px;height:9.5px;background:#a2a2a2;"></div><div class="b " style="left:1750px;top:1449px;width:2px;height:9.5px;background:#a2a2a2;"></div><div class="b " style="left:1806px;top:1449px;width:2px;height:9.5px;background:#a2a2a2;"></div><div class="b " style="left:1862px;top:1449px;width:2px;height:9.5px;background:#a2a2a2;"></div><div class="b " style="left:1918px;top:1437px;width:2px;height:21.5px;background:#a2a2a2;"></div><div class="b " style="left:1974px;top:1449px;width:2px;height:9.5px;background:#a2a2a2;"></div><div class="b " style="left:2030px;top:1449px;width:2px;height:9.5px;background:#a2a2a2;"></div><div class="b " style="left:2086px;top:1449px;width:2px;height:9.5px;background:#a2a2a2;"></div><div class="b " style="left:2142px;top:1449px;width:2px;height:9.5px;background:#a2a2a2;"></div><div class="b " style="left:2200px;top:1437px;width:2px;height:21.5px;background:#a2a2a2;"></div><div class="b " style="left:2256px;top:1449px;width:2px;height:9.5px;background:#a2a2a2;"></div><div class="b " style="left:2312px;top:1449px;width:2px;height:9.5px;background:#a2a2a2;"></div><div class="b " style="left:2368px;top:1449px;width:2px;height:9.5px;background:#a2a2a2;"></div><div class="b " style="left:2424px;top:1449px;width:2px;height:9.5px;background:#a2a2a2;"></div><div class="b " style="left:2480px;top:1437px;width:2px;height:21.5px;background:#a2a2a2;"></div><svg class="b" style="left:1402px;top:1432px;overflow:visible" width="31" height="28" viewBox="0 0 31 28" ><path d="M0 0 H22.2 V15 L12 27 H10.2 L0 15 Z" fill="#3e97f3"/><rect x="10.2" y="18" width="1.8" height="5.2" fill="#0c1014"/><rect x="10.2" y="23.2" width="1.8" height="4" fill="#a2a2a2"/><path d="M19.5 19.6 H30.2 V20.8 L28.6 22 V23.4 L27 24.6 V26 L25.6 27.6 H16.6 V23.5 Z" fill="#3e97f3"/></svg><div class="b " style="left:1076px;top:1487.7px;width:1420px;height:26.3px;background:#4c4c4c;"></div><svg class="b" style="left:1075.7px;top:1488.7px;overflow:visible" width="24.6" height="24.6" viewBox="0 0 24.6 24.6" ><circle cx="12.3" cy="12.3" r="10.3" fill="#0b0b0b" stroke="#c9c9c9" stroke-width="4"/></svg><svg class="b" style="left:2471.7px;top:1488.7px;overflow:visible" width="24.6" height="24.6" viewBox="0 0 24.6 24.6" ><circle cx="12.3" cy="12.3" r="10.3" fill="#0b0b0b" stroke="#c9c9c9" stroke-width="4"/></svg><svg class="b" style="left:1423.5px;top:1540px;overflow:visible" width="19" height="20" viewBox="0 0 19 20" ><path d="M0 0 H18.8 V11.7 L9.4 20 L0 11.7 Z" fill="#b4b4b4"/></svg><svg class="b" style="left:0px;top:0px;overflow:visible" width="3456" height="2234" viewBox="0 0 3456 2234" ><path d="M1501.8 1536.2 V1545 L1497.5 1548.8 L1501.8 1552.6 V1561.6" fill="none" stroke="#b4b4b4" stroke-width="3.7" stroke-linejoin="miter"/><path d="M1557.9 1536.2 V1545 L1562.2 1548.8 L1557.9 1552.6 V1561.6" fill="none" stroke="#b4b4b4" stroke-width="3.7" stroke-linejoin="miter"/><path d="M1649.8 1536.2 V1545 L1645.5 1548.8 L1649.8 1552.6 V1561.6" fill="none" stroke="#b4b4b4" stroke-width="3.7" stroke-linejoin="miter"/><path d="M1654.5 1548.9 L1664.4 1540.7 V1545.4 H1673.8 V1552.4 H1664.4 V1557.1 Z" fill="#b4b4b4"/><path d="M1711.4 1549.1 L1726 1540.7 V1557.5 Z" fill="#b4b4b4"/><rect x="1729.7" y="1540.7" width="4" height="16.8" fill="#b4b4b4"/><path d="M1776 1540 L1794.8 1549 L1776 1558 Z" fill="#b4b4b4"/><rect x="1837.8" y="1540.7" width="4" height="16.8" fill="#b4b4b4"/><path d="M1860.6 1549.1 L1845.8 1540.7 V1557.5 Z" fill="#b4b4b4"/><path d="M1918.2 1548.9 L1908.8 1540.7 V1545.4 H1899.9 V1552.4 H1908.8 V1557.1 Z" fill="#b4b4b4"/><path d="M1921.7 1536.2 V1545 L1926.0 1548.8 L1921.7 1552.6 V1561.6" fill="none" stroke="#b4b4b4" stroke-width="3.7" stroke-linejoin="miter"/></svg><svg class="b" style="left:1990px;top:1536px;overflow:visible" width="38.5" height="24" viewBox="0 0 38.5 24" ><rect x="0" y="10.8" width="13.7" height="13.2" fill="#b4b4b4"/><rect x="24.3" y="10.8" width="13.8" height="13.2" fill="#b4b4b4"/><rect x="11" y="1.2" width="16" height="13.4" fill="none" stroke="#b4b4b4" stroke-width="2.4"/><path d="M19 4 L23.2 10.2 H14.8 Z" fill="#b4b4b4"/></svg><svg class="b" style="left:2054px;top:1536px;overflow:visible" width="38.5" height="24" viewBox="0 0 38.5 24" ><rect x="0" y="10.8" width="13.7" height="13.2" fill="#b4b4b4"/><rect x="24.3" y="10.8" width="13.8" height="13.2" fill="#b4b4b4"/><rect x="11" y="1.2" width="16" height="13.4" fill="none" stroke="#b4b4b4" stroke-width="2.4"/><path d="M19 4 L23.2 10.2 H14.8 Z" fill="#b4b4b4"/><path d="M2.6 13.6 L8.6 17.8 L2.6 22 Z" fill="#1d1d1d"/><path d="M35.6 13.6 L29.6 17.8 L35.6 22 Z" fill="#1d1d1d"/></svg><svg class="b" style="left:2123.7px;top:1537.7px;overflow:visible" width="29" height="22.5" viewBox="0 0 29 22.5" ><path d="M0 5 H7.5 L10 0.8 H19 L21.5 5 H28.7 V22.3 H0 Z" fill="#b4b4b4"/><circle cx="14.4" cy="13.2" r="6" fill="#1d1d1d"/><circle cx="14.4" cy="13.2" r="3.6" fill="#b4b4b4"/></svg><svg class="b" style="left:2182px;top:1534px;overflow:visible" width="40" height="31" viewBox="0 0 40 31" ><rect x="0" y="0" width="22" height="17" fill="#b4b4b4"/><rect x="1.5" y="1.8" width="2.2" height="2" fill="#1d1d1d"/><rect x="18.3" y="1.8" width="2.2" height="2" fill="#1d1d1d"/><rect x="1.5" y="5.6" width="2.2" height="2" fill="#1d1d1d"/><rect x="18.3" y="5.6" width="2.2" height="2" fill="#1d1d1d"/><rect x="1.5" y="9.4" width="2.2" height="2" fill="#1d1d1d"/><rect x="18.3" y="9.4" width="2.2" height="2" fill="#1d1d1d"/><rect x="1.5" y="13.2" width="2.2" height="2" fill="#1d1d1d"/><rect x="18.3" y="13.2" width="2.2" height="2" fill="#1d1d1d"/><rect x="14.5" y="11.5" width="25" height="19.5" fill="#1d1d1d"/><rect x="17.2" y="14.2" width="20.6" height="15" fill="none" stroke="#b4b4b4" stroke-width="2.4"/><rect x="19.6" y="16.4" width="1.8" height="1.6" fill="#b4b4b4"/><rect x="33.6" y="16.4" width="1.8" height="1.6" fill="#b4b4b4"/><rect x="19.6" y="19.799999999999997" width="1.8" height="1.6" fill="#b4b4b4"/><rect x="33.6" y="19.799999999999997" width="1.8" height="1.6" fill="#b4b4b4"/><rect x="19.6" y="23.2" width="1.8" height="1.6" fill="#b4b4b4"/><rect x="33.6" y="23.2" width="1.8" height="1.6" fill="#b4b4b4"/><rect x="19.6" y="26.599999999999998" width="1.8" height="1.6" fill="#b4b4b4"/><rect x="33.6" y="26.599999999999998" width="1.8" height="1.6" fill="#b4b4b4"/></svg><svg class="b" style="left:2253.7px;top:1537.2px;overflow:visible" width="26" height="26" viewBox="0 0 26 26" ><rect x="0.8" y="1.2" width="12" height="12" fill="#b4b4b4"/><rect x="12.8" y="13.6" width="11.8" height="11" fill="#b4b4b4"/><path d="M-1.5 -1.2 L26.5 27" stroke="#1d1d1d" stroke-width="7"/><path d="M0.2 0.6 L25.2 25.4" stroke="#b4b4b4" stroke-width="2.5"/><path d="M16.2 3.2 A7.4 7.4 0 0 1 23.4 10" fill="none" stroke="#b4b4b4" stroke-width="2.3"/><path d="M20.4 9 H26.4 L23.4 13.2 Z" fill="#b4b4b4"/><path d="M9.4 23.2 A7.4 7.4 0 0 1 2.2 16.4" fill="none" stroke="#b4b4b4" stroke-width="2.3"/><path d="M-0.8 17.4 H5.2 L2.2 13.2 Z" fill="#b4b4b4"/></svg><svg class="b" style="left:2447.2px;top:1538.4px;overflow:visible" width="21.8" height="21.8" viewBox="0 0 21.8 21.8" ><rect x="7.9" y="0" width="6" height="21.8" fill="#b4b4b4"/><rect x="0" y="7.9" width="21.8" height="6" fill="#b4b4b4"/></svg><div class="t " style="left:2551.38px;top:153.80px;font-size:24px;line-height:48px;color:#b0b0b0;letter-spacing:0.208px;"><span style="letter-spacing:-0.36px">プロジェクト</span>: <span style="letter-spacing:0.21px">縦書き</span></div><div class="t " style="left:2860.88px;top:153.80px;font-size:24px;line-height:48px;color:#dcdcdc;letter-spacing:0.588px;"><span style="letter-spacing:0.59px">プロパティ</span></div><div class="b " style="left:2860px;top:196px;width:158px;height:2.3px;background:#e2e2e2;"></div><svg class="b" style="left:3001.6px;top:169.5px;overflow:visible" width="16.5" height="14.5" viewBox="0 0 16.5 14.5" ><rect x="0" y="0" width="16.5" height="2" fill="#dcdcdc"/><rect x="0" y="6.2" width="16.5" height="2" fill="#dcdcdc"/><rect x="0" y="12.4" width="16.5" height="2" fill="#dcdcdc"/></svg><div class="t " style="left:3062.81px;top:153.80px;font-size:24px;line-height:48px;color:#b0b0b0;letter-spacing:0.093px;"><span style="font-size:23.04px">Lumetri </span><span style="letter-spacing:0.09px">カラー</span></div><div class="b" style="left:3300px;top:156px;width:105.5px;height:40px;overflow:hidden"><div class="t " style="left:-0.62px;top:-2.20px;font-size:24px;line-height:48px;color:#b0b0b0;letter-spacing:0.251px;"><span style="letter-spacing:-0.43px">エフェクト</span></div></div><div class="b " style="left:3405px;top:160px;width:2.5px;height:32px;background:#5a5a5a;"></div><svg class="b" style="left:3421px;top:169px;overflow:visible" width="22" height="16" viewBox="0 0 22 16" ><path d="M1.5 1.5 L8.5 8 L1.5 14.5" fill="none" stroke="#b4b4b4" stroke-width="3.2" stroke-linejoin="miter"/><path d="M12.0 1.5 L19.0 8 L12.0 14.5" fill="none" stroke="#b4b4b4" stroke-width="3.2" stroke-linejoin="miter"/></svg><svg class="b" style="left:2555.9px;top:234px;overflow:visible" width="29" height="28" viewBox="0 0 29 28" ><rect x="12" y="3" width="2.2" height="24.5" fill="#c8c8c8"/><rect x="10" y="0" width="6.2" height="4.5" fill="none" stroke="#c8c8c8" stroke-width="1.5"/><rect x="4" y="8.5" width="6.5" height="3.5" fill="#6f9fd8"/><rect x="15.7" y="8.5" width="12.8" height="3.5" fill="#6f9fd8"/><rect x="0" y="14.5" width="10.5" height="3.5" fill="#6f9fd8"/><rect x="15.7" y="14.5" width="6" height="3.5" fill="#6f9fd8"/><rect x="3" y="20.8" width="7.5" height="3.8" fill="#2fd99a"/><rect x="15.7" y="20.8" width="12.8" height="3.8" fill="#2fd99a"/></svg><div class="t " style="left:2601.24px;top:228.60px;font-size:22px;line-height:44px;color:#c6c6c6;letter-spacing:0.608px;font-weight:700;">22355498</div><div class="b " style="left:3338.2px;top:244.5px;width:6.6px;height:6.6px;background:#a8a8a8;border-radius:50%"></div><div class="b " style="left:3349.5px;top:244.5px;width:6.6px;height:6.6px;background:#a8a8a8;border-radius:50%"></div><div class="b " style="left:3360.7999999999997px;top:244.5px;width:6.6px;height:6.6px;background:#a8a8a8;border-radius:50%"></div><div class="t " style="left:2658.19px;top:875.60px;font-size:24px;line-height:48px;color:#b2b2b2;"><span style="letter-spacing:-0.58px">タイムラインでクリップを選択してプロパティを表示します。</span></div><div class="b " style="left:2529px;top:1513px;width:925px;height:2px;background:#101010;"></div><div class="b " style="left:2554.7px;top:1532px;width:364.3px;height:46.7px;background:#0d0d0d;border:2px solid #373737;border-radius:9px"></div><svg class="b" style="left:2569.6px;top:1541px;overflow:visible" width="30" height="30" viewBox="0 0 30 30" ><path d="M1.5 20.5 L17.5 1.5 L20.5 17" fill="none" stroke="#c4c4c4" stroke-width="2.4" stroke-linejoin="round"/><rect x="14" y="14" width="15.5" height="13.5" fill="#c4c4c4"/><circle cx="10" cy="23" r="5.6" fill="#0d0d0d" stroke="#c4c4c4" stroke-width="2.4"/></svg><div class="t " style="left:2613.73px;top:1532.20px;font-size:24px;line-height:48px;color:#cfcfcf;"><span style="letter-spacing:-0.06px">新しいグラフィックを作成</span></div><div class="b " style="left:0px;top:1606px;width:2px;height:584px;background:#000;"></div><div class="b " style="left:168px;top:1606px;width:8px;height:584px;background:#000;"></div><div class="b " style="left:0px;top:2190px;width:3456px;height:4px;background:#000;"></div><div class="b " style="left:3292px;top:1606px;width:8px;height:584px;background:#000;"></div><div class="b " style="left:3454px;top:1606px;width:2px;height:584px;background:#000;"></div><svg class="b" style="left:0px;top:0px;overflow:visible" width="170" height="2234" viewBox="0 0 170 2234" ><path d="M40.1 1646 L64.2 1669.7 L50.5 1669.7 L40.1 1680.2 Z" fill="#b4b4b4"/><path d="M100.4 1651.3 H97.1 V1654.6 M103.8 1651.3 H108.6 M112 1651.3 H115 V1654.2 M97.1 1658.3 V1663.7 M97.1 1667.4 V1670.7 H100.4 M103.8 1670.7 H108.6 M112 1670.7 H115 V1667.8" fill="none" stroke="#b4b4b4" stroke-width="2.7"/><path d="M107.9 1658.2 H120.5 V1654.1 L130.7 1661 L120.5 1667.8 V1663.7 H107.9 Z" fill="#b4b4b4"/><path d="M134 1675.2 V1682.0 H127 Z" fill="#b4b4b4"/><rect x="47.8" y="1711.8" width="4.3" height="28" rx="0.8" fill="#b4b4b4"/><path d="M29.9 1724.5 L44.2 1717.8 V1731.3 Z" fill="#b4b4b4"/><path d="M70 1724.5 L56 1717.8 V1731.3 Z" fill="#b4b4b4"/><rect x="43" y="1723" width="14" height="3.2" fill="#b4b4b4"/><path d="M70.3 1739 V1745.8 H63.3 Z" fill="#b4b4b4"/><g transform="translate(114.1,1727.2) rotate(43.5)"><rect x="-13.7" y="-8" width="27.4" height="16" rx="1.8" fill="#b4b4b4"/><rect x="-8.5" y="-0.8" width="17" height="1.6" fill="#1d1d1d"/><circle cx="0" cy="0" r="2" fill="#1d1d1d"/><rect x="-9" y="-2.6" width="1.8" height="5.2" fill="#1d1d1d"/><rect x="7.2" y="-2.6" width="1.8" height="5.2" fill="#1d1d1d"/></g><rect x="29.9" y="1775.9" width="4.1" height="28.1" fill="#b4b4b4"/><rect x="66.2" y="1775.9" width="4.1" height="28.1" fill="#b4b4b4"/><path d="M36.4 1788.8 L44 1782 V1795.6 Z" fill="#b4b4b4"/><path d="M63.8 1788.8 L56.2 1782 V1795.6 Z" fill="#b4b4b4"/><rect x="43" y="1787.2" width="14" height="3.2" fill="#b4b4b4"/><path d="M70.3 1803.5 V1810.3 H63.3 Z" fill="#b4b4b4"/><path d="M98.1 1803.2 L106.5 1784.5 L114.7 1781 L122.9 1789.1 L119.4 1798.5 L100.7 1806.1 Z" fill="#b4b4b4"/><path d="M115.3 1779.2 L120 1774.5 L129.3 1783.9 L124.6 1788.6 Z" fill="#b4b4b4"/><path d="M99.5 1804.5 L108.3 1795.5" stroke="#1d1d1d" stroke-width="1.6"/><circle cx="108.8" cy="1795" r="2.1" fill="#1d1d1d"/><rect x="35.2" y="1841.2" width="29.6" height="25.5" fill="#3b3b3b" stroke="#b4b4b4" stroke-width="2.3"/><path d="M70 1867.2 V1874.0 H63 Z" fill="#b4b4b4"/><g transform="translate(98,1837.8)" fill="#b4b4b4"><path d="M8.5 31 C5 28 2.5 22.5 0.6 18.5 C-0.5 16.2 2 14.2 4 16 L9.5 21.5 L7.8 6.5 C7.5 3.5 11 3 11.6 5.8 L14.2 15.5 L14.5 2.5 C14.5 -0.5 18.3 -0.5 18.5 2.5 L19.2 15.5 L22 5.5 C22.8 2.7 26.3 3.5 25.8 6.5 L24 17.5 L27.5 10.5 C28.8 8 32 9.5 31 12.2 L26.5 24 C25 28 24 30 22 31.2 C19 33 12 33 8.5 31 Z"/></g><path d="M134.1 1867.2 V1874.0 H127.1 Z" fill="#b4b4b4"/><rect x="26" y="1894" width="48" height="48" rx="8.5" fill="#0b6ce9"/><rect x="34" y="1904" width="2" height="24" fill="#fff"/><path d="M30 1926 H40 L35 1932 Z" fill="#fff"/><path d="M42.3 1904 H65.9 V1912.2 H62.3 V1908 H56.4 V1928.3 H60 V1931.9 H48.2 V1928.3 H52 V1908 H45.9 V1912.2 H42.3 Z" fill="#fff"/><path d="M70 1931 V1937.8 H63 Z" fill="#c4bcb4"/><defs><linearGradient id="aig" x1="0" y1="0" x2="1" y2="1"><stop offset="0" stop-color="#c040d0"/><stop offset="1" stop-color="#5a55f5"/></linearGradient></defs><rect x="91.7" y="1895.7" width="44.6" height="44.6" rx="8" fill="none" stroke="url(#aig)" stroke-width="1.7"/><rect x="110" y="1904" width="3.8" height="28.2" fill="#b4b4b4"/><path d="M95.9 1909.2 L102.3 1904 V1914.4 Z" fill="#b4b4b4"/><rect x="101.5" y="1907.6" width="9" height="3.2" fill="#b4b4b4"/><path d="M128.2 1927.1 L121.8 1921.9 V1932.3 Z" fill="#b4b4b4"/><rect x="113.5" y="1925.5" width="9" height="3.2" fill="#b4b4b4"/><path d="M124.5 1902.6 L126.3 1907.8 L131.5 1909.6 L126.3 1911.4 L124.5 1916.6 L122.7 1911.4 L117.5 1909.6 L122.7 1907.8 Z" fill="#b4b4b4"/><path d="M117.7 1913 L119.1 1916.9 L123 1918.3 L119.1 1919.7 L117.7 1923.6 L116.3 1919.7 L112.4 1918.3 L116.3 1916.9 Z" fill="#b4b4b4" stroke="#1d1d1d" stroke-width="1.2"/></svg><div class="b " style="left:176px;top:1606px;width:3116px;height:584px;background:transparent;border:2px solid #3c8fea"></div><svg class="b" style="left:198.5px;top:1626.7px;overflow:visible" width="10.5" height="10.5" viewBox="0 0 10.5 10.5" ><path d="M0.5 0.5 L10 10 M10 0.5 L0.5 10" stroke="#a8a8a8" stroke-width="1.8" fill="none"/></svg><div class="b " style="left:228px;top:1618px;width:20px;height:20px;background:#3d4900;"></div><div class="t " style="left:269.49px;top:1609.40px;font-size:22px;line-height:44px;color:#d6d6d6;letter-spacing:-0.060px;-webkit-text-stroke:0.30px #d6d6d6;">22355498</div><svg class="b" style="left:387.7px;top:1624px;overflow:visible" width="16.5" height="14.5" viewBox="0 0 16.5 14.5" ><rect x="0" y="0" width="16.5" height="2" fill="#b8b8b8"/><rect x="0" y="6.2" width="16.5" height="2" fill="#b8b8b8"/><rect x="0" y="12.4" width="16.5" height="2" fill="#b8b8b8"/></svg><div class="t " style="left:211.73px;top:1655.99px;font-size:27px;line-height:54px;color:#3e97f3;letter-spacing:0.672px;font-weight:700;">00:00:01:05</div><div class="b " style="left:202px;top:1710px;width:48px;height:48px;background:#464646;border-radius:9px"></div><div class="b " style="left:266px;top:1710px;width:48px;height:48px;background:#464646;border-radius:9px"></div><div class="b " style="left:330px;top:1710px;width:48px;height:48px;background:#464646;border-radius:9px"></div><svg class="b" style="left:202px;top:1710px;overflow:visible" width="48" height="48" viewBox="0 0 48 48" ><rect x="24" y="13.3" width="2.2" height="22.7" fill="#dedede"/><rect x="22.1" y="10" width="6" height="3.8" fill="#dedede"/><rect x="14.1" y="18.3" width="8" height="3.5" fill="#dedede"/><rect x="10" y="24.2" width="12.1" height="3.6" fill="#dedede"/><rect x="16" y="30.3" width="6.1" height="3.6" fill="#dedede"/><rect x="28.2" y="18.3" width="7.8" height="3.5" fill="#dedede"/><rect x="28.2" y="24.2" width="3.6" height="3.6" fill="#dedede"/><rect x="28.2" y="30.3" width="9.8" height="3.6" fill="#dedede"/></svg><svg class="b" style="left:266px;top:1710px;overflow:visible" width="48" height="48" viewBox="0 0 48 48" ><path d="M14 35 V23.3 A10 10 0 0 1 34 23.3 V35 H29 V23.3 A5 5 0 0 0 19 23.3 V35 Z" fill="#dedede"/><rect x="14" y="29" width="5" height="6" fill="#8a8a8a"/><rect x="29" y="29" width="5" height="6" fill="#8a8a8a"/></svg><svg class="b" style="left:330px;top:1710px;overflow:visible" width="48" height="48" viewBox="0 0 48 48" ><rect x="10" y="12" width="7.8" height="9.7" fill="#dedede"/><rect x="11" y="25.2" width="5.8" height="7.8" fill="none" stroke="#dedede" stroke-width="2"/><rect x="17" y="26.3" width="3" height="5.6" fill="#464646"/><path d="M24 12 H38 V21.7 H33.7 Z" fill="#dedede"/><path d="M20 12.5 L38 30.5 L27.6 30.5 L20 38.5 Z" fill="#dedede"/></svg><svg class="b" style="left:411px;top:1726px;overflow:visible" width="14.5" height="18.5" viewBox="0 0 14.5 18.5" ><path d="M0 0 H14.2 V10 L7.1 18.2 L0 10 Z" fill="#b4b4b4"/></svg><svg class="b" style="left:468px;top:1720px;overflow:visible" width="28.5" height="28.5" viewBox="0 0 28.5 28.5" ><path d="M11.5 0.3 C8.5 -0.5 5.2 0.2 2.9 2.3 L8.3 7.7 L7.7 10.7 L4.7 11.3 L-0.6 6 C-1.5 9 -0.8 12.3 1.5 14.6 C3.9 17 7.4 17.7 10.4 16.6 L22.3 28.5 C23.5 29.7 25.5 29.7 26.7 28.5 C27.9 27.3 27.9 25.3 26.7 24.1 L14.8 12.2 C15.9 9.2 15.2 5.7 12.8 3.3 Z" fill="#b4b4b4" transform="translate(1.4741379310344827,0.29482758620689653) scale(0.9532758620689654)"/></svg><svg class="b" style="left:530px;top:1724px;overflow:visible" width="32" height="20" viewBox="0 0 32 20" ><rect x="0" y="0" width="32" height="20" rx="4" fill="#6c6c6c"/><path d="M13.8 6.6 A5 5 0 1 0 13.8 13.4" fill="none" stroke="#232323" stroke-width="3.3"/><path d="M27.2 6.6 A5 5 0 1 0 27.2 13.4" fill="none" stroke="#232323" stroke-width="3.3"/></svg><div class="b " style="left:202px;top:1772px;width:382px;height:2px;background:#2e2e2e;"></div><div class="b " style="left:586px;top:1746.8px;width:2px;height:22.2px;background:#a2a2a2;"></div><div class="b " style="left:632px;top:1758.7px;width:2px;height:10.3px;background:#a2a2a2;"></div><div class="b " style="left:680px;top:1758.7px;width:2px;height:10.3px;background:#a2a2a2;"></div><div class="b " style="left:730px;top:1758.7px;width:2px;height:10.3px;background:#a2a2a2;"></div><div class="b " style="left:778px;top:1758.7px;width:2px;height:10.3px;background:#a2a2a2;"></div><div class="b " style="left:828px;top:1746.8px;width:2px;height:22.2px;background:#a2a2a2;"></div><div class="b " style="left:876px;top:1758.7px;width:2px;height:10.3px;background:#a2a2a2;"></div><div class="b " style="left:924px;top:1758.7px;width:2px;height:10.3px;background:#a2a2a2;"></div><div class="b " style="left:974px;top:1758.7px;width:2px;height:10.3px;background:#a2a2a2;"></div><div class="b " style="left:1022px;top:1758.7px;width:2px;height:10.3px;background:#a2a2a2;"></div><div class="b " style="left:1072px;top:1746.8px;width:2px;height:22.2px;background:#a2a2a2;"></div><div class="b " style="left:1120px;top:1758.7px;width:2px;height:10.3px;background:#a2a2a2;"></div><div class="b " style="left:1168px;top:1758.7px;width:2px;height:10.3px;background:#a2a2a2;"></div><div class="b " style="left:1218px;top:1758.7px;width:2px;height:10.3px;background:#a2a2a2;"></div><div class="b " style="left:1266px;top:1758.7px;width:2px;height:10.3px;background:#a2a2a2;"></div><div class="b " style="left:1316px;top:1746.8px;width:2px;height:22.2px;background:#a2a2a2;"></div><div class="b " style="left:1364px;top:1758.7px;width:2px;height:10.3px;background:#a2a2a2;"></div><div class="b " style="left:1412px;top:1758.7px;width:2px;height:10.3px;background:#a2a2a2;"></div><div class="b " style="left:1462px;top:1758.7px;width:2px;height:10.3px;background:#a2a2a2;"></div><div class="b " style="left:1510px;top:1758.7px;width:2px;height:10.3px;background:#a2a2a2;"></div><div class="b " style="left:1560px;top:1746.8px;width:2px;height:22.2px;background:#a2a2a2;"></div><div class="b " style="left:1608px;top:1758.7px;width:2px;height:10.3px;background:#a2a2a2;"></div><div class="b " style="left:1656px;top:1758.7px;width:2px;height:10.3px;background:#a2a2a2;"></div><div class="b " style="left:1706px;top:1758.7px;width:2px;height:10.3px;background:#a2a2a2;"></div><div class="b " style="left:1754px;top:1758.7px;width:2px;height:10.3px;background:#a2a2a2;"></div><div class="b " style="left:1804px;top:1746.8px;width:2px;height:22.2px;background:#a2a2a2;"></div><div class="b " style="left:1852px;top:1758.7px;width:2px;height:10.3px;background:#a2a2a2;"></div><div class="b " style="left:1900px;top:1758.7px;width:2px;height:10.3px;background:#a2a2a2;"></div><div class="b " style="left:1950px;top:1758.7px;width:2px;height:10.3px;background:#a2a2a2;"></div><div class="b " style="left:1998px;top:1758.7px;width:2px;height:10.3px;background:#a2a2a2;"></div><div class="b " style="left:2048px;top:1746.8px;width:2px;height:22.2px;background:#a2a2a2;"></div><div class="b " style="left:2096px;top:1758.7px;width:2px;height:10.3px;background:#a2a2a2;"></div><div class="b " style="left:2144px;top:1758.7px;width:2px;height:10.3px;background:#a2a2a2;"></div><div class="b " style="left:2194px;top:1758.7px;width:2px;height:10.3px;background:#a2a2a2;"></div><div class="b " style="left:2242px;top:1758.7px;width:2px;height:10.3px;background:#a2a2a2;"></div><div class="b " style="left:2292px;top:1746.8px;width:2px;height:22.2px;background:#a2a2a2;"></div><div class="b " style="left:2340px;top:1758.7px;width:2px;height:10.3px;background:#a2a2a2;"></div><div class="b " style="left:2388px;top:1758.7px;width:2px;height:10.3px;background:#a2a2a2;"></div><div class="b " style="left:2438px;top:1758.7px;width:2px;height:10.3px;background:#a2a2a2;"></div><div class="b " style="left:2486px;top:1758.7px;width:2px;height:10.3px;background:#a2a2a2;"></div><div class="b " style="left:2536px;top:1746.8px;width:2px;height:22.2px;background:#a2a2a2;"></div><div class="b " style="left:2584px;top:1758.7px;width:2px;height:10.3px;background:#a2a2a2;"></div><div class="b " style="left:2634px;top:1758.7px;width:2px;height:10.3px;background:#a2a2a2;"></div><div class="b " style="left:2682px;top:1758.7px;width:2px;height:10.3px;background:#a2a2a2;"></div><div class="b " style="left:2730px;top:1758.7px;width:2px;height:10.3px;background:#a2a2a2;"></div><div class="b " style="left:2780px;top:1746.8px;width:2px;height:22.2px;background:#a2a2a2;"></div><div class="b " style="left:2828px;top:1758.7px;width:2px;height:10.3px;background:#a2a2a2;"></div><div class="b " style="left:2878px;top:1758.7px;width:2px;height:10.3px;background:#a2a2a2;"></div><div class="b " style="left:2926px;top:1758.7px;width:2px;height:10.3px;background:#a2a2a2;"></div><div class="b " style="left:2974px;top:1758.7px;width:2px;height:10.3px;background:#a2a2a2;"></div><div class="b " style="left:3024px;top:1746.8px;width:2px;height:22.2px;background:#a2a2a2;"></div><div class="b " style="left:3072px;top:1758.7px;width:2px;height:10.3px;background:#a2a2a2;"></div><div class="b " style="left:3122px;top:1758.7px;width:2px;height:10.3px;background:#a2a2a2;"></div><div class="b " style="left:3170px;top:1758.7px;width:2px;height:10.3px;background:#a2a2a2;"></div><div class="b " style="left:3218px;top:1758.7px;width:2px;height:10.3px;background:#a2a2a2;"></div><div class="t " style="left:584.68px;top:1711.88px;font-size:21px;line-height:42px;color:#bcbcbc;letter-spacing:0.750px;">:00:00</div><div class="t " style="left:774.68px;top:1711.88px;font-size:21px;line-height:42px;color:#bcbcbc;letter-spacing:0.400px;">00:00:01:00</div><div class="t " style="left:1018.73px;top:1711.88px;font-size:21px;line-height:42px;color:#bcbcbc;letter-spacing:0.400px;">00:00:02:00</div><div class="t " style="left:1262.78px;top:1711.88px;font-size:21px;line-height:42px;color:#bcbcbc;letter-spacing:0.400px;">00:00:03:00</div><div class="t " style="left:1506.83px;top:1711.88px;font-size:21px;line-height:42px;color:#bcbcbc;letter-spacing:0.400px;">00:00:04:00</div><div class="t " style="left:1750.88px;top:1711.88px;font-size:21px;line-height:42px;color:#bcbcbc;letter-spacing:0.400px;">00:00:05:00</div><div class="t " style="left:1994.93px;top:1711.88px;font-size:21px;line-height:42px;color:#bcbcbc;letter-spacing:0.400px;">00:00:06:00</div><div class="t " style="left:2238.98px;top:1711.88px;font-size:21px;line-height:42px;color:#bcbcbc;letter-spacing:0.400px;">00:00:07:00</div><div class="t " style="left:2483.03px;top:1711.88px;font-size:21px;line-height:42px;color:#bcbcbc;letter-spacing:0.400px;">00:00:08:00</div><div class="t " style="left:2727.08px;top:1711.88px;font-size:21px;line-height:42px;color:#bcbcbc;letter-spacing:0.400px;">00:00:09:00</div><div class="t " style="left:2971.13px;top:1711.88px;font-size:21px;line-height:42px;color:#bcbcbc;letter-spacing:0.400px;">00:00:10:00</div><div class="b" style="left:3200px;top:1712px;width:44px;height:40px;overflow:hidden"><div class="t " style="left:11.88px;top:-0.12px;font-size:21px;line-height:42px;color:#bcbcbc;letter-spacing:0.400px;">00:00:11:00</div></div><div class="b " style="left:586px;top:1770px;width:1218px;height:4.2px;background:#f0f000;"></div><div class="b " style="left:178px;top:1788px;width:3058px;height:2px;background:#323232;"></div><div class="b " style="left:178px;top:1870px;width:3058px;height:2px;background:#323232;"></div><div class="b " style="left:178px;top:2042px;width:3058px;height:2px;background:#323232;"></div><div class="b " style="left:178px;top:2124.5px;width:3058px;height:2px;background:#323232;"></div><div class="b " style="left:178px;top:1952.5px;width:3090px;height:9.5px;background:#323232;"></div><div class="b " style="left:584px;top:1749px;width:2px;height:391px;background:#3a3a3a;"></div><svg class="b" style="left:264.9px;top:1817.2px;overflow:visible" width="21" height="24" viewBox="0 0 21 24" ><rect x="0.3" y="9.8" width="20" height="14" rx="1" fill="#b4b4b4"/><path d="M4.6 10 V6.5 C4.6 2.5 8 0.8 11 1.6 " fill="none" stroke="#b4b4b4" stroke-width="2.8" stroke-linecap="butt"/><circle cx="10.2" cy="14.8" r="2.8" fill="#1d1d1d"/><rect x="8.7" y="15.5" width="3" height="5" fill="#1d1d1d"/></svg><div class="t " style="left:308.80px;top:1809.70px;font-size:22px;line-height:44px;color:#b0b0b0;letter-spacing:-0.206px;">V2</div><svg class="b" style="left:358.4px;top:1820.3px;overflow:visible" width="25" height="18.5" viewBox="0 0 25 18.5" ><rect x="15" y="3.5" width="8" height="11.5" fill="none" stroke="#b4b4b4" stroke-width="2.4"/><rect x="1.2" y="1.2" width="14" height="6.6" fill="#1d1d1d" stroke="#b4b4b4" stroke-width="2.4"/><rect x="1.2" y="10.7" width="14" height="6.6" fill="#1d1d1d" stroke="#b4b4b4" stroke-width="2.4"/></svg><svg class="b" style="left:404.2px;top:1822.9px;overflow:visible" width="26.5" height="17" viewBox="0 0 26.5 17" ><path d="M0 8.5 C4 2.5 8.5 0 13.2 0 C18 0 22.5 2.5 26.5 8.5 C22.5 14.5 18 17 13.2 17 C8.5 17 4 14.5 0 8.5 Z" fill="#b4b4b4"/><circle cx="13.2" cy="8.2" r="5.5" fill="#1d1d1d"/><circle cx="15" cy="6.5" r="1.4" fill="#b4b4b4"/></svg><div class="b " style="left:202px;top:1872px;width:48px;height:80px;background:#045bc9;border-radius:9px"></div><div class="t " style="left:212.40px;top:1890.01px;font-size:23px;line-height:46px;color:#f0f0f0;letter-spacing:0.092px;-webkit-text-stroke:0.35px #f0f0f0">V1</div><div class="b " style="left:298px;top:1872px;width:48px;height:80px;background:#045bc9;border-radius:9px"></div><div class="t " style="left:308.40px;top:1890.01px;font-size:23px;line-height:46px;color:#f0f0f0;letter-spacing:0.092px;-webkit-text-stroke:0.35px #f0f0f0">V1</div><svg class="b" style="left:264.9px;top:1898px;overflow:visible" width="21" height="24" viewBox="0 0 21 24" ><rect x="0.3" y="9.8" width="20" height="14" rx="1" fill="#b4b4b4"/><path d="M4.6 10 V6.5 C4.6 2.5 8 0.8 11 1.6 " fill="none" stroke="#b4b4b4" stroke-width="2.8" stroke-linecap="butt"/><circle cx="10.2" cy="14.8" r="2.8" fill="#1d1d1d"/><rect x="8.7" y="15.5" width="3" height="5" fill="#1d1d1d"/></svg><svg class="b" style="left:358.4px;top:1901px;overflow:visible" width="25" height="18.5" viewBox="0 0 25 18.5" ><rect x="15" y="3.5" width="8" height="11.5" fill="none" stroke="#b4b4b4" stroke-width="2.4"/><rect x="1.2" y="1.2" width="14" height="6.6" fill="#1d1d1d" stroke="#b4b4b4" stroke-width="2.4"/><rect x="1.2" y="10.7" width="14" height="6.6" fill="#1d1d1d" stroke="#b4b4b4" stroke-width="2.4"/></svg><svg class="b" style="left:404.2px;top:1903.6px;overflow:visible" width="26.5" height="17" viewBox="0 0 26.5 17" ><path d="M0 8.5 C4 2.5 8.5 0 13.2 0 C18 0 22.5 2.5 26.5 8.5 C22.5 14.5 18 17 13.2 17 C8.5 17 4 14.5 0 8.5 Z" fill="#b4b4b4"/><circle cx="13.2" cy="8.2" r="5.5" fill="#1d1d1d"/><circle cx="15" cy="6.5" r="1.4" fill="#b4b4b4"/></svg><div class="b " style="left:298px;top:1962.3px;width:48px;height:79.5px;background:#045bc9;border-radius:9px"></div><div class="t " style="left:308.47px;top:1980.06px;font-size:23px;line-height:46px;color:#f0f0f0;-webkit-text-stroke:0.35px #f0f0f0">A1</div><div class="b " style="left:298px;top:2044.3px;width:48px;height:79.5px;background:#045bc9;border-radius:9px"></div><div class="t " style="left:308.46px;top:2062.06px;font-size:23px;line-height:46px;color:#f0f0f0;letter-spacing:0.069px;-webkit-text-stroke:0.35px #f0f0f0">A2</div><div class="b" style="left:298px;top:2126.3px;width:48px;height:13.7px;overflow:hidden"><div class="b " style="left:0px;top:0px;width:48px;height:60px;background:#045bc9;border-radius:9px"></div></div><svg class="b" style="left:264.9px;top:1988.6px;overflow:visible" width="21" height="24" viewBox="0 0 21 24" ><rect x="0.3" y="9.8" width="20" height="14" rx="1" fill="#b4b4b4"/><path d="M4.6 10 V6.5 C4.6 2.5 8 0.8 11 1.6 " fill="none" stroke="#b4b4b4" stroke-width="2.8" stroke-linecap="butt"/><circle cx="10.2" cy="14.8" r="2.8" fill="#1d1d1d"/><rect x="8.7" y="15.5" width="3" height="5" fill="#1d1d1d"/></svg><svg class="b" style="left:358.4px;top:1991.6px;overflow:visible" width="25" height="18.5" viewBox="0 0 25 18.5" ><rect x="15" y="3.5" width="8" height="11.5" fill="none" stroke="#b4b4b4" stroke-width="2.4"/><rect x="1.2" y="1.2" width="14" height="6.6" fill="#1d1d1d" stroke="#b4b4b4" stroke-width="2.4"/><rect x="1.2" y="10.7" width="14" height="6.6" fill="#1d1d1d" stroke="#b4b4b4" stroke-width="2.4"/></svg><div class="t " style="left:408.66px;top:1983.46px;font-size:20px;line-height:40px;color:#b0b0b0;">M</div><div class="t " style="left:459.59px;top:1983.46px;font-size:20px;line-height:40px;color:#b0b0b0;">S</div><svg class="b" style="left:504px;top:1988.3px;overflow:visible" width="18" height="28" viewBox="0 0 18 28" ><rect x="4.8" y="0" width="8.4" height="17.5" rx="4.2" fill="#8d8d8d"/><path d="M1.2 10.5 V12.5 C1.2 21.5 16.8 21.5 16.8 12.5 V10.5" fill="none" stroke="#8d8d8d" stroke-width="1.8"/><rect x="8.1" y="19.5" width="1.8" height="6.5" fill="#8d8d8d"/><rect x="2.5" y="26" width="13" height="1.8" fill="#8d8d8d"/></svg><svg class="b" style="left:264.9px;top:2070.6px;overflow:visible" width="21" height="24" viewBox="0 0 21 24" ><rect x="0.3" y="9.8" width="20" height="14" rx="1" fill="#b4b4b4"/><path d="M4.6 10 V6.5 C4.6 2.5 8 0.8 11 1.6 " fill="none" stroke="#b4b4b4" stroke-width="2.8" stroke-linecap="butt"/><circle cx="10.2" cy="14.8" r="2.8" fill="#1d1d1d"/><rect x="8.7" y="15.5" width="3" height="5" fill="#1d1d1d"/></svg><svg class="b" style="left:358.4px;top:2073.6px;overflow:visible" width="25" height="18.5" viewBox="0 0 25 18.5" ><rect x="15" y="3.5" width="8" height="11.5" fill="none" stroke="#b4b4b4" stroke-width="2.4"/><rect x="1.2" y="1.2" width="14" height="6.6" fill="#1d1d1d" stroke="#b4b4b4" stroke-width="2.4"/><rect x="1.2" y="10.7" width="14" height="6.6" fill="#1d1d1d" stroke="#b4b4b4" stroke-width="2.4"/></svg><div class="t " style="left:408.66px;top:2065.46px;font-size:20px;line-height:40px;color:#b0b0b0;">M</div><div class="t " style="left:459.59px;top:2065.46px;font-size:20px;line-height:40px;color:#b0b0b0;">S</div><svg class="b" style="left:504px;top:2070.2999999999997px;overflow:visible" width="18" height="28" viewBox="0 0 18 28" ><rect x="4.8" y="0" width="8.4" height="17.5" rx="4.2" fill="#8d8d8d"/><path d="M1.2 10.5 V12.5 C1.2 21.5 16.8 21.5 16.8 12.5 V10.5" fill="none" stroke="#8d8d8d" stroke-width="1.8"/><rect x="8.1" y="19.5" width="1.8" height="6.5" fill="#8d8d8d"/><rect x="2.5" y="26" width="13" height="1.8" fill="#8d8d8d"/></svg><div class="b " style="left:586px;top:1871.8px;width:1216px;height:80.2px;background:#75108a;border:1.5px solid #9233a6;border-radius:4px 4px 3px 3px"></div><div class="b " style="left:586px;top:1904px;width:63.6px;height:48px;background:#fff;border-radius:0 0 0 3px"></div><div class="t " style="left:600.30px;top:1867.34px;font-size:22px;line-height:44px;color:#ead9ef;letter-spacing:0.433px;"><span style="letter-spacing:0.43px">カラーマット</span></div><div class="t " style="left:1763.89px;top:1866.03px;font-size:24px;line-height:48px;color:#a862ba;letter-spacing:-0.762px;font-style:italic;">fx</div><div class="b " style="left:877.8px;top:1764px;width:2px;height:375px;background:#3e97f3;"></div><svg class="b" style="left:867.6px;top:1746px;overflow:visible" width="29" height="24" viewBox="0 0 29 24" ><path d="M0.3 0 H22.5 V15.5 L12.5 23.2 H10.5 L0.3 15.5 Z" fill="#3e97f3"/><rect x="10.3" y="18.2" width="1.8" height="5.5" fill="#101820"/><path d="M19.5 18.2 H28.8 V19.4 L26.6 21.2 V22.4 L25 23.6 H14.5 Z" fill="#3e97f3"/></svg><div class="b " style="left:3235.5px;top:1782px;width:24px;height:163px;background:#454545;"></div><div class="b " style="left:3235.5px;top:1970px;width:24px;height:161.5px;background:#454545;"></div><svg class="b" style="left:3235.2999999999997px;top:1789.2px;overflow:visible" width="24.6" height="24.6" viewBox="0 0 24.6 24.6" ><circle cx="12.3" cy="12.3" r="10.3" fill="#0b0b0b" stroke="#c9c9c9" stroke-width="4"/></svg><svg class="b" style="left:3235.2999999999997px;top:1921.7px;overflow:visible" width="24.6" height="24.6" viewBox="0 0 24.6 24.6" ><circle cx="12.3" cy="12.3" r="10.3" fill="#0b0b0b" stroke="#c9c9c9" stroke-width="4"/></svg><svg class="b" style="left:3235.2999999999997px;top:1969.9px;overflow:visible" width="24.6" height="24.6" viewBox="0 0 24.6 24.6" ><circle cx="12.3" cy="12.3" r="10.3" fill="#0b0b0b" stroke="#c9c9c9" stroke-width="4"/></svg><svg class="b" style="left:3235.2999999999997px;top:2100.3999999999996px;overflow:visible" width="24.6" height="24.6" viewBox="0 0 24.6 24.6" ><circle cx="12.3" cy="12.3" r="10.3" fill="#0b0b0b" stroke="#c9c9c9" stroke-width="4"/></svg><div class="b " style="left:200px;top:2140px;width:3045.5px;height:25.3px;background:#323232;"></div><div class="b " style="left:200px;top:2140px;width:222px;height:25.3px;background:#4c4c4c;"></div><svg class="b" style="left:199.79999999999998px;top:2140.7px;overflow:visible" width="24.6" height="24.6" viewBox="0 0 24.6 24.6" ><circle cx="12.3" cy="12.3" r="10.3" fill="#0b0b0b" stroke="#c9c9c9" stroke-width="4"/></svg><svg class="b" style="left:398.09999999999997px;top:2140.7px;overflow:visible" width="24.6" height="24.6" viewBox="0 0 24.6 24.6" ><circle cx="12.3" cy="12.3" r="10.3" fill="#0b0b0b" stroke="#c9c9c9" stroke-width="4"/></svg><div class="b " style="left:3327.5px;top:1659.7px;width:54.5px;height:16.3px;background:#000;"></div><div class="b " style="left:3354.2px;top:1659.7px;width:1.6px;height:16.3px;background:#1d1d1d;"></div><div class="b " style="left:3327.5px;top:1678px;width:54.5px;height:444px;background:#000;"></div><div class="b " style="left:3327.5px;top:2117.4px;width:26.2px;height:2.6px;background:#f4f400;"></div><div class="b " style="left:3355.8px;top:2117.4px;width:26.2px;height:2.6px;background:#f4f400;"></div><div class="b " style="left:3384px;top:1679px;width:8.2px;height:2px;background:#b4b4b4;"></div><div class="b " style="left:3384px;top:1687px;width:4.2px;height:2px;background:#b0b0b0;"></div><div class="b " style="left:3384px;top:1695px;width:4.2px;height:2px;background:#b0b0b0;"></div><div class="b " style="left:3384px;top:1701px;width:4.2px;height:2px;background:#b0b0b0;"></div><div class="b " style="left:3384px;top:1709px;width:4.2px;height:2px;background:#b0b0b0;"></div><div class="b " style="left:3384px;top:1717px;width:4.2px;height:2px;background:#b0b0b0;"></div><div class="t " style="left:3399.24px;top:1663.85px;font-size:19.5px;line-height:39.0px;color:#b4b4b4;">0</div><div class="b " style="left:3384px;top:1723px;width:8.2px;height:2px;background:#b4b4b4;"></div><div class="b " style="left:3384px;top:1731px;width:4.2px;height:2px;background:#b0b0b0;"></div><div class="b " style="left:3384px;top:1739px;width:4.2px;height:2px;background:#b0b0b0;"></div><div class="b " style="left:3384px;top:1745px;width:4.2px;height:2px;background:#b0b0b0;"></div><div class="b " style="left:3384px;top:1753px;width:4.2px;height:2px;background:#b0b0b0;"></div><div class="b " style="left:3384px;top:1761px;width:4.2px;height:2px;background:#b0b0b0;"></div><div class="t " style="left:3399.13px;top:1707.70px;font-size:19.5px;line-height:39.0px;color:#b4b4b4;">-6</div><div class="b " style="left:3384px;top:1767px;width:8.2px;height:2px;background:#b4b4b4;"></div><div class="b " style="left:3384px;top:1775px;width:4.2px;height:2px;background:#b0b0b0;"></div><div class="b " style="left:3384px;top:1783px;width:4.2px;height:2px;background:#b0b0b0;"></div><div class="b " style="left:3384px;top:1789px;width:4.2px;height:2px;background:#b0b0b0;"></div><div class="b " style="left:3384px;top:1797px;width:4.2px;height:2px;background:#b0b0b0;"></div><div class="b " style="left:3384px;top:1805px;width:4.2px;height:2px;background:#b0b0b0;"></div><div class="t " style="left:3399.13px;top:1751.55px;font-size:19.5px;line-height:39.0px;color:#b4b4b4;">-12</div><div class="b " style="left:3384px;top:1811px;width:8.2px;height:2px;background:#b4b4b4;"></div><div class="b " style="left:3384px;top:1819px;width:4.2px;height:2px;background:#b0b0b0;"></div><div class="b " style="left:3384px;top:1827px;width:4.2px;height:2px;background:#b0b0b0;"></div><div class="b " style="left:3384px;top:1833px;width:4.2px;height:2px;background:#b0b0b0;"></div><div class="b " style="left:3384px;top:1841px;width:4.2px;height:2px;background:#b0b0b0;"></div><div class="b " style="left:3384px;top:1849px;width:4.2px;height:2px;background:#b0b0b0;"></div><div class="t " style="left:3399.13px;top:1795.40px;font-size:19.5px;line-height:39.0px;color:#b4b4b4;">-18</div><div class="b " style="left:3384px;top:1855px;width:8.2px;height:2px;background:#b4b4b4;"></div><div class="b " style="left:3384px;top:1863px;width:4.2px;height:2px;background:#b0b0b0;"></div><div class="b " style="left:3384px;top:1871px;width:4.2px;height:2px;background:#b0b0b0;"></div><div class="b " style="left:3384px;top:1877px;width:4.2px;height:2px;background:#b0b0b0;"></div><div class="b " style="left:3384px;top:1885px;width:4.2px;height:2px;background:#b0b0b0;"></div><div class="b " style="left:3384px;top:1891px;width:4.2px;height:2px;background:#b0b0b0;"></div><div class="t " style="left:3399.13px;top:1839.25px;font-size:19.5px;line-height:39.0px;color:#b4b4b4;">-24</div><div class="b " style="left:3384px;top:1899px;width:8.2px;height:2px;background:#b4b4b4;"></div><div class="b " style="left:3384px;top:1907px;width:4.2px;height:2px;background:#b0b0b0;"></div><div class="b " style="left:3384px;top:1913px;width:4.2px;height:2px;background:#b0b0b0;"></div><div class="b " style="left:3384px;top:1921px;width:4.2px;height:2px;background:#b0b0b0;"></div><div class="b " style="left:3384px;top:1929px;width:4.2px;height:2px;background:#b0b0b0;"></div><div class="b " style="left:3384px;top:1935px;width:4.2px;height:2px;background:#b0b0b0;"></div><div class="t " style="left:3399.13px;top:1883.10px;font-size:19.5px;line-height:39.0px;color:#b4b4b4;">-30</div><div class="b " style="left:3384px;top:1943px;width:8.2px;height:2px;background:#b4b4b4;"></div><div class="b " style="left:3384px;top:1951px;width:4.2px;height:2px;background:#b0b0b0;"></div><div class="b " style="left:3384px;top:1957px;width:4.2px;height:2px;background:#b0b0b0;"></div><div class="b " style="left:3384px;top:1965px;width:4.2px;height:2px;background:#b0b0b0;"></div><div class="b " style="left:3384px;top:1973px;width:4.2px;height:2px;background:#b0b0b0;"></div><div class="b " style="left:3384px;top:1979px;width:4.2px;height:2px;background:#b0b0b0;"></div><div class="t " style="left:3399.13px;top:1926.95px;font-size:19.5px;line-height:39.0px;color:#b4b4b4;">-36</div><div class="b " style="left:3384px;top:1987px;width:8.2px;height:2px;background:#b4b4b4;"></div><div class="b " style="left:3384px;top:1995px;width:4.2px;height:2px;background:#b0b0b0;"></div><div class="b " style="left:3384px;top:2001px;width:4.2px;height:2px;background:#b0b0b0;"></div><div class="b " style="left:3384px;top:2009px;width:4.2px;height:2px;background:#b0b0b0;"></div><div class="b " style="left:3384px;top:2017px;width:4.2px;height:2px;background:#b0b0b0;"></div><div class="b " style="left:3384px;top:2023px;width:4.2px;height:2px;background:#b0b0b0;"></div><div class="t " style="left:3399.13px;top:1970.80px;font-size:19.5px;line-height:39.0px;color:#b4b4b4;">-42</div><div class="b " style="left:3384px;top:2031px;width:8.2px;height:2px;background:#b4b4b4;"></div><div class="b " style="left:3384px;top:2039px;width:4.2px;height:2px;background:#b0b0b0;"></div><div class="b " style="left:3384px;top:2045px;width:4.2px;height:2px;background:#b0b0b0;"></div><div class="b " style="left:3384px;top:2053px;width:4.2px;height:2px;background:#b0b0b0;"></div><div class="b " style="left:3384px;top:2061px;width:4.2px;height:2px;background:#b0b0b0;"></div><div class="b " style="left:3384px;top:2067px;width:4.2px;height:2px;background:#b0b0b0;"></div><div class="t " style="left:3399.13px;top:2014.65px;font-size:19.5px;line-height:39.0px;color:#b4b4b4;">-48</div><div class="b " style="left:3384px;top:2075px;width:8.2px;height:2px;background:#b4b4b4;"></div><div class="b " style="left:3384px;top:2081px;width:4.2px;height:2px;background:#b0b0b0;"></div><div class="b " style="left:3384px;top:2089px;width:4.2px;height:2px;background:#b0b0b0;"></div><div class="b " style="left:3384px;top:2097px;width:4.2px;height:2px;background:#b0b0b0;"></div><div class="b " style="left:3384px;top:2103px;width:4.2px;height:2px;background:#b0b0b0;"></div><div class="b " style="left:3384px;top:2111px;width:4.2px;height:2px;background:#b0b0b0;"></div><div class="t " style="left:3399.13px;top:2058.50px;font-size:19.5px;line-height:39.0px;color:#b4b4b4;">-54</div><div class="b " style="left:3384px;top:2119px;width:8.2px;height:2px;background:#b4b4b4;"></div><div class="t " style="left:3399.18px;top:2094.55px;font-size:19.5px;line-height:39.0px;color:#b4b4b4;">dB</div><div class="t " style="left:3334.60px;top:2130.32px;font-size:18px;line-height:36px;color:#b0b0b0;">S</div><div class="t " style="left:3362.80px;top:2130.32px;font-size:18px;line-height:36px;color:#b0b0b0;">S</div><svg class="b" style="left:3393.6px;top:2200.4px;overflow:visible" width="28" height="28" viewBox="0 0 28 28" ><circle cx="14" cy="14" r="12.6" fill="none" stroke="#b8b8b8" stroke-width="2.2"/><circle cx="14" cy="8.3" r="1.9" fill="#b8b8b8"/><path d="M11 12 H15.3 V19.5 H17.5 V21.3 H10.8 V19.5 H12.8 V13.8 H11 Z" fill="#b8b8b8"/></svg><div class="b" style="left:876px;top:76px;width:742px;height:790px;border-radius:13px;box-shadow:0 12px 32px rgba(0,0,0,0.2),0 0 0 1px rgba(0,0,0,0.5)"><div class="b" style="left:0;top:0;width:742px;height:790px;border-radius:13px;overflow:hidden"><div class="b" style="left:0;top:0;width:742px;height:790px;background:#2b2b2a"></div><div class="b" style="left:212px;top:156px;width:1000px;height:1100px;background:#81807e;filter:blur(60px)"></div><div class="b " style="left:10px;top:120px;width:722px;height:44px;background:rgba(255,255,255,0.11);border-radius:9px"></div><div class="t " style="left:28.00px;top:6.26px;font-size:26px;line-height:52px;color:#f6f6f6;-webkit-text-stroke:0.60px #f6f6f6;"><span style="font-size:26.52px">Adobe Fonts </span><span style="font-size:24.4px;letter-spacing:0.05px">からフォントを追加</span><span style="font-size:26.52px">...</span></div><div class="t " style="left:28.00px;top:50.26px;font-size:26px;line-height:52px;color:#f6f6f6;-webkit-text-stroke:0.60px #f6f6f6;"><span style="font-size:24.4px;letter-spacing:-0.34px">モーショングラフィックステンプレートをインストール</span><span style="font-size:26.52px">...</span></div><div class="b " style="left:28px;top:108px;width:686px;height:2px;background:rgba(255,255,255,0.13);"></div><div class="t " style="left:28.00px;top:116.26px;font-size:26px;line-height:52px;color:#f6f6f6;-webkit-text-stroke:0.60px #f6f6f6;"><span style="font-size:24.4px;letter-spacing:-0.17px">新規レイヤー</span></div><svg class="b" style="left:699.5px;top:132px;" width="13" height="20" viewBox="0 0 13 20"><path d="M2.2 2.2 L10.6 10 L2.2 17.8" fill="none" stroke="#f0f0f0" stroke-width="3.4" stroke-linecap="round" stroke-linejoin="round"/></svg><div class="b " style="left:28px;top:174px;width:686px;height:2px;background:rgba(255,255,255,0.13);"></div><div class="t " style="left:28.00px;top:182.26px;font-size:26px;line-height:52px;color:#f6f6f6;-webkit-text-stroke:0.60px #f6f6f6;"><span style="font-size:24.4px;letter-spacing:-0.31px;opacity:0.27">ビデオフレームに合わせる</span></div><svg class="b" style="left:699.5px;top:198px;" width="13" height="20" viewBox="0 0 13 20"><path d="M2.2 2.2 L10.6 10 L2.2 17.8" fill="none" stroke="rgba(255,255,255,0.27)" stroke-width="3.4" stroke-linecap="round" stroke-linejoin="round"/></svg><div class="t " style="left:28.00px;top:226.26px;font-size:26px;line-height:52px;color:#f6f6f6;-webkit-text-stroke:0.60px #f6f6f6;"><span style="font-size:24.4px;letter-spacing:-0.33px;opacity:0.27">グループとしてビデオフレームに合わせる</span></div><svg class="b" style="left:699.5px;top:242px;" width="13" height="20" viewBox="0 0 13 20"><path d="M2.2 2.2 L10.6 10 L2.2 17.8" fill="none" stroke="rgba(255,255,255,0.27)" stroke-width="3.4" stroke-linecap="round" stroke-linejoin="round"/></svg><div class="t " style="left:28.00px;top:270.26px;font-size:26px;line-height:52px;color:#f6f6f6;-webkit-text-stroke:0.60px #f6f6f6;"><span style="font-size:24.4px;letter-spacing:-0.39px;opacity:0.27">選択範囲に揃える</span></div><svg class="b" style="left:699.5px;top:286px;" width="13" height="20" viewBox="0 0 13 20"><path d="M2.2 2.2 L10.6 10 L2.2 17.8" fill="none" stroke="rgba(255,255,255,0.27)" stroke-width="3.4" stroke-linecap="round" stroke-linejoin="round"/></svg><div class="t " style="left:28.00px;top:314.26px;font-size:26px;line-height:52px;color:#f6f6f6;letter-spacing:-0.758px;-webkit-text-stroke:0.60px #f6f6f6;"><span style="font-size:24.4px;letter-spacing:-0.76px;opacity:0.27">分布</span></div><svg class="b" style="left:699.5px;top:330px;" width="13" height="20" viewBox="0 0 13 20"><path d="M2.2 2.2 L10.6 10 L2.2 17.8" fill="none" stroke="rgba(255,255,255,0.27)" stroke-width="3.4" stroke-linecap="round" stroke-linejoin="round"/></svg><div class="t " style="left:28.00px;top:358.26px;font-size:26px;line-height:52px;color:#f6f6f6;-webkit-text-stroke:0.60px #f6f6f6;"><span style="font-size:24.4px;letter-spacing:-0.56px;opacity:0.27">重ね順</span></div><svg class="b" style="left:699.5px;top:374px;" width="13" height="20" viewBox="0 0 13 20"><path d="M2.2 2.2 L10.6 10 L2.2 17.8" fill="none" stroke="rgba(255,255,255,0.27)" stroke-width="3.4" stroke-linecap="round" stroke-linejoin="round"/></svg><div class="t " style="left:28.00px;top:402.26px;font-size:26px;line-height:52px;color:#f6f6f6;letter-spacing:-1.661px;-webkit-text-stroke:0.60px #f6f6f6;"><span style="font-size:24.4px;letter-spacing:-1.66px">選択</span></div><svg class="b" style="left:699.5px;top:418px;" width="13" height="20" viewBox="0 0 13 20"><path d="M2.2 2.2 L10.6 10 L2.2 17.8" fill="none" stroke="#f0f0f0" stroke-width="3.4" stroke-linecap="round" stroke-linejoin="round"/></svg><div class="b " style="left:28px;top:460px;width:686px;height:2px;background:rgba(255,255,255,0.13);"></div><div class="t " style="left:28.00px;top:468.26px;font-size:26px;line-height:52px;color:#f6f6f6;-webkit-text-stroke:0.60px #f6f6f6;"><span style="font-size:24.4px;letter-spacing:-0.25px;opacity:0.27">ソースグラフィックにアップグレード</span></div><div class="t " style="left:28.00px;top:512.26px;font-size:26px;line-height:52px;color:#f6f6f6;-webkit-text-stroke:0.60px #f6f6f6;"><span style="font-size:24.4px;letter-spacing:-0.24px;opacity:0.27">キャプションをグラフィックにアップグレード</span></div><div class="t " style="left:28.00px;top:556.26px;font-size:26px;line-height:52px;color:#f6f6f6;letter-spacing:0.063px;-webkit-text-stroke:0.60px #f6f6f6;"><span style="font-size:24.4px;letter-spacing:-0.27px;opacity:0.27">すべてのパラメーターをリセット</span></div><div class="t " style="left:28.00px;top:600.26px;font-size:26px;line-height:52px;color:#f6f6f6;letter-spacing:0.214px;-webkit-text-stroke:0.60px #f6f6f6;"><span style="font-size:24.4px;letter-spacing:-0.29px;opacity:0.27">リセットされたデュレーション</span></div><div class="b " style="left:28px;top:658px;width:686px;height:2px;background:rgba(255,255,255,0.13);"></div><div class="t " style="left:28.00px;top:666.26px;font-size:26px;line-height:52px;color:#f6f6f6;-webkit-text-stroke:0.60px #f6f6f6;"><span style="font-size:24.4px;letter-spacing:-0.35px;opacity:0.27">モーショングラフィックステンプレートとして書き出し</span><span style="font-size:26.52px"><span style="opacity:0.27">...</span></span></div><div class="b " style="left:28px;top:724px;width:686px;height:2px;background:rgba(255,255,255,0.13);"></div><div class="t " style="left:28.00px;top:732.26px;font-size:26px;line-height:52px;color:#f6f6f6;-webkit-text-stroke:0.60px #f6f6f6;"><span style="font-size:24.4px;letter-spacing:-0.29px">プロジェクト内のフォントを置換</span><span style="font-size:26.52px">...</span></div></div><div class="b" style="left:0;top:0;width:742px;height:790px;border-radius:13px;border:1.5px solid rgba(255,255,255,0.22)"></div></div><div class="b" style="left:1608px;top:186px;width:344px;height:328px;border-radius:13px;box-shadow:0 12px 32px rgba(0,0,0,0.2),0 0 0 1px rgba(0,0,0,0.5)"><div class="b" style="left:0;top:0;width:344px;height:328px;border-radius:13px;overflow:hidden"><div class="b" style="left:0;top:0;width:344px;height:328px;background:#2f2f2e"></div><div class="b" style="left:-120px;top:50px;width:700px;height:700px;background:#81807e;filter:blur(52px)"></div><div class="b " style="left:9.5px;top:54px;width:324.5px;height:44px;background:#2f7de0;border-radius:9px;background:linear-gradient(#2d7bdf,#428be8)"></div><div class="t " style="left:28.00px;top:6.66px;font-size:26px;line-height:52px;color:#f8f8f8;letter-spacing:0.050px;-webkit-text-stroke:0.60px #f8f8f8;"><span style="font-size:24.4px;letter-spacing:-0.37px">横書きテキスト</span></div><div class="t " style="left:303.01px;top:7.86px;font-size:25.5px;line-height:51.0px;color:rgba(255,255,255,0.3);">T</div><svg class="b" style="left:274.5px;top:22.650000000000006px" width="20.5" height="20.5" viewBox="0 0 19 19"><path d="M6.5 6.5 H12.5 V12.5 H6.5 Z M6.5 6.5 V4 A2.5 2.5 0 1 0 4 6.5 H6.5 M12.5 6.5 H15 A2.5 2.5 0 1 0 12.5 4 V6.5 M12.5 12.5 V15 A2.5 2.5 0 1 0 15 12.5 H12.5 M6.5 12.5 H4 A2.5 2.5 0 1 0 6.5 15 V12.5" fill="none" stroke="rgba(255,255,255,0.3)" stroke-width="2.1"/></svg><div class="t " style="left:28.00px;top:50.26px;font-size:26px;line-height:52px;color:#f8f8f8;letter-spacing:0.050px;-webkit-text-stroke:0.60px #f8f8f8;"><span style="font-size:24.4px;letter-spacing:-0.37px">縦書きテキスト</span></div><div class="b " style="left:28px;top:108px;width:288px;height:2px;background:rgba(255,255,255,0.14);"></div><div class="t " style="left:28.00px;top:116.86px;font-size:26px;line-height:52px;color:#f8f8f8;letter-spacing:-0.146px;-webkit-text-stroke:0.60px #f8f8f8;"><span style="font-size:24.4px;letter-spacing:-0.15px">長方形</span></div><div class="t " style="left:300.77px;top:118.06px;font-size:25.5px;line-height:51.0px;color:rgba(255,255,255,0.3);">R</div><svg class="b" style="left:274.5px;top:132.85000000000002px" width="20.5" height="20.5" viewBox="0 0 19 19"><path d="M6.5 6.5 H12.5 V12.5 H6.5 Z M6.5 6.5 V4 A2.5 2.5 0 1 0 4 6.5 H6.5 M12.5 6.5 H15 A2.5 2.5 0 1 0 12.5 4 V6.5 M12.5 12.5 V15 A2.5 2.5 0 1 0 15 12.5 H12.5 M6.5 12.5 H4 A2.5 2.5 0 1 0 6.5 15 V12.5" fill="none" stroke="rgba(255,255,255,0.3)" stroke-width="2.1"/></svg><svg class="b" style="left:246.0px;top:132.60000000000002px" width="21" height="21" viewBox="0 0 19 19"><path d="M0.5 3.5 H6.8 L12.6 15.5 H18.5 M11.8 3.5 H18.5" fill="none" stroke="rgba(255,255,255,0.3)" stroke-width="2"/></svg><div class="t " style="left:28.00px;top:160.76px;font-size:26px;line-height:52px;color:#f8f8f8;letter-spacing:-0.472px;-webkit-text-stroke:0.60px #f8f8f8;"><span style="font-size:24.4px;letter-spacing:-0.47px">楕円</span></div><div class="t " style="left:302.09px;top:161.96px;font-size:25.5px;line-height:51.0px;color:rgba(255,255,255,0.3);">E</div><svg class="b" style="left:274.5px;top:176.75px" width="20.5" height="20.5" viewBox="0 0 19 19"><path d="M6.5 6.5 H12.5 V12.5 H6.5 Z M6.5 6.5 V4 A2.5 2.5 0 1 0 4 6.5 H6.5 M12.5 6.5 H15 A2.5 2.5 0 1 0 12.5 4 V6.5 M12.5 12.5 V15 A2.5 2.5 0 1 0 15 12.5 H12.5 M6.5 12.5 H4 A2.5 2.5 0 1 0 6.5 15 V12.5" fill="none" stroke="rgba(255,255,255,0.3)" stroke-width="2.1"/></svg><svg class="b" style="left:246.0px;top:176.5px" width="21" height="21" viewBox="0 0 19 19"><path d="M0.5 3.5 H6.8 L12.6 15.5 H18.5 M11.8 3.5 H18.5" fill="none" stroke="rgba(255,255,255,0.3)" stroke-width="2"/></svg><div class="t " style="left:28.00px;top:204.26px;font-size:26px;line-height:52px;color:#f8f8f8;letter-spacing:-0.146px;-webkit-text-stroke:0.60px #f8f8f8;"><span style="font-size:24.4px;letter-spacing:-0.15px">多角形</span></div><div class="b " style="left:28px;top:262px;width:288px;height:2px;background:rgba(255,255,255,0.14);"></div><div class="t " style="left:28.00px;top:270.26px;font-size:26px;line-height:52px;color:#f8f8f8;-webkit-text-stroke:0.60px #f8f8f8;"><span style="font-size:24.4px;letter-spacing:-0.07px">ファイルから</span>...</div></div><div class="b" style="left:0;top:0;width:344px;height:328px;border-radius:13px;border:1.5px solid rgba(255,255,255,0.22)"></div></div>
</body></html>
